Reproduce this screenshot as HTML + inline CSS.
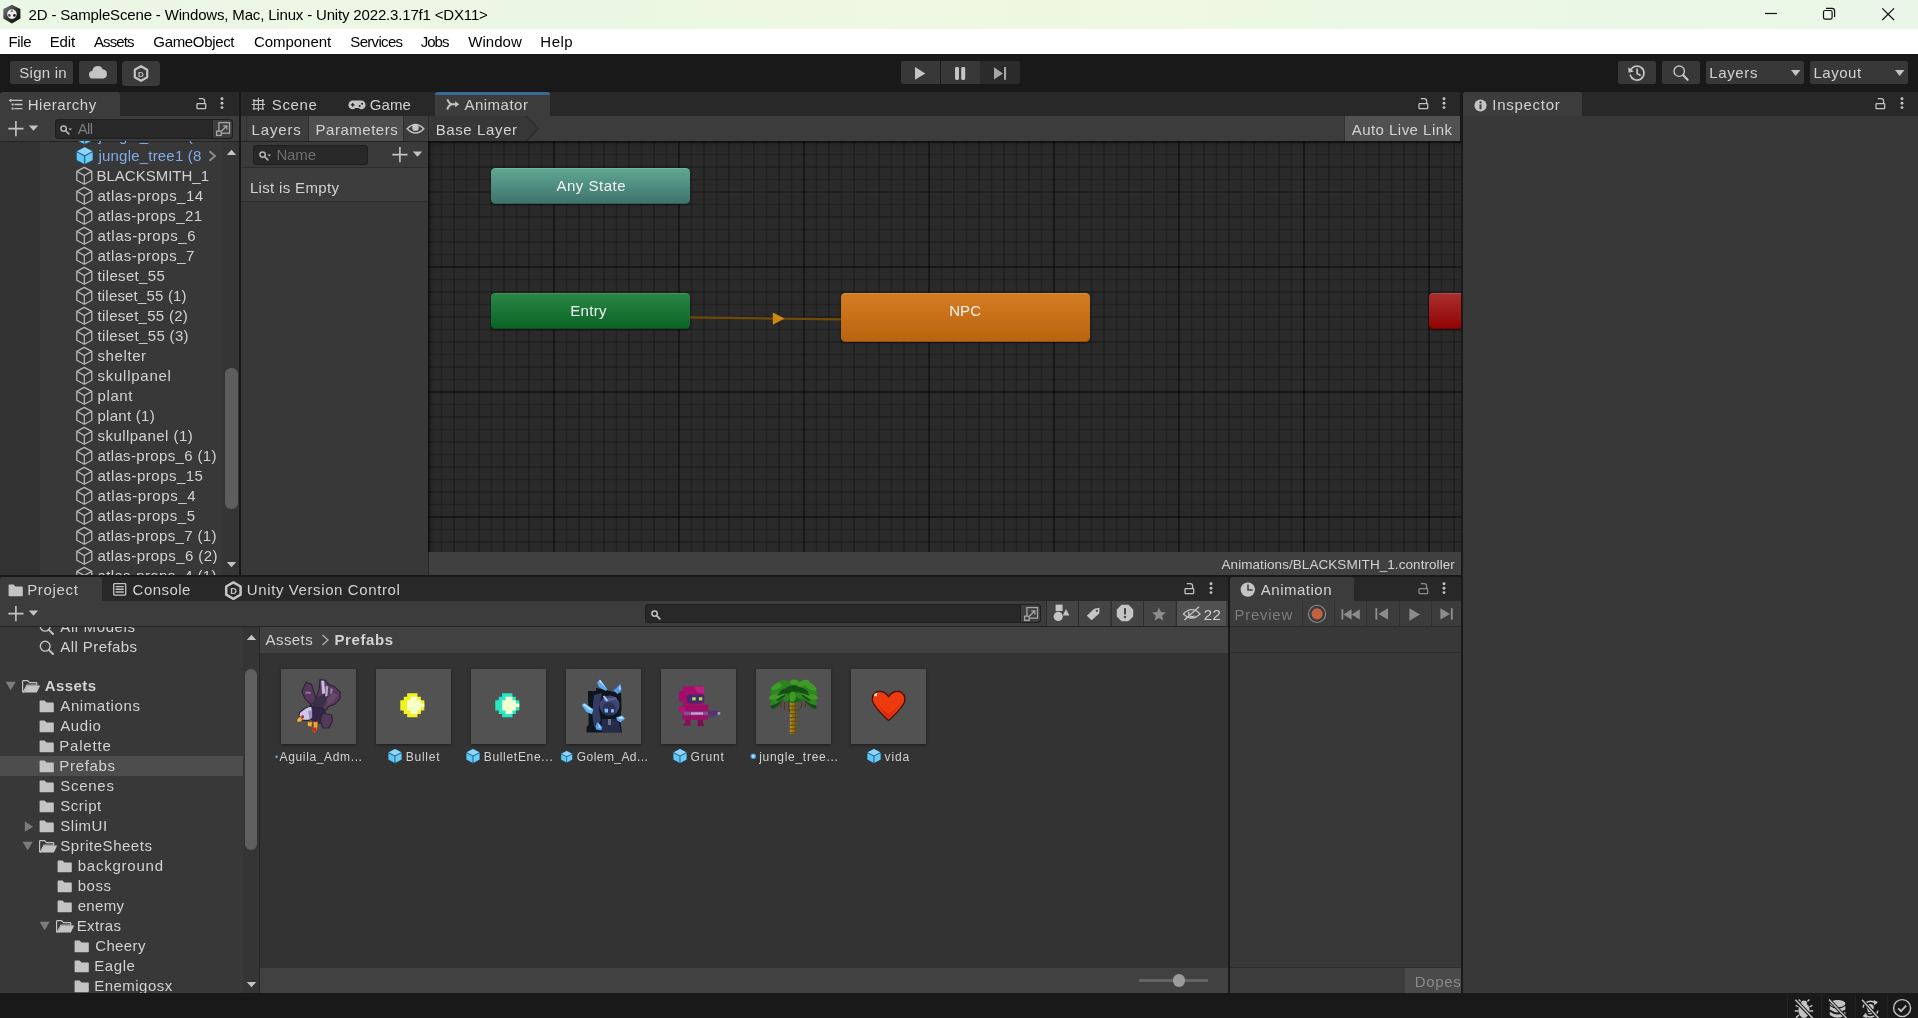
<!DOCTYPE html>
<html><head><meta charset="utf-8"><title>Unity</title><style>
html,body{margin:0;padding:0;background:#191919;}
body{width:1918px;height:1018px;overflow:hidden;position:relative;font-family:"Liberation Sans", sans-serif;}
div,span,svg{position:absolute;}
#root{left:0;top:0;width:1918px;height:1018px;will-change:transform;}
span{white-space:pre;line-height:20px;}
</style></head><body><div id="root">
<div style="left:0px;top:0px;width:1918px;height:29px;background:linear-gradient(to right,#ebf7e5 0%,#ecf7e3 30%,#eef8e1 55%,#ebf7e6 85%,#eaf7e8 100%);"></div>
<div style="left:0px;top:29px;width:1918px;height:25px;background:#ffffff;"></div>
<div style="left:0px;top:54px;width:1918px;height:964px;background:#191919;"></div>
<svg style="left:3px;top:4px;" width="19" height="20" viewBox="0 0 19 20"><defs><linearGradient id="ug" x1="0" y1="0" x2="1" y2="1"><stop offset="0" stop-color="#858585"/><stop offset=".55" stop-color="#2c2c2c"/><stop offset="1" stop-color="#050505"/></linearGradient></defs>
<path d="M8.9 .7 L17.4 5.1 V14.6 L8.9 19.6 L.3 14.6 V5.1 Z" fill="url(#ug)"/>
<circle cx="8.9" cy="10.1" r="4.8" fill="#ececec"/>
<circle cx="8.9" cy="7" r="1.25" fill="#8a8a8a"/><circle cx="6.4" cy="11.4" r="1.3" fill="#4a4a4a"/><circle cx="11.4" cy="11.4" r="1.35" fill="#1c1c1c"/></svg>
<span style="left:28.60px;top:5.04px;font-size:15px;color:#000;letter-spacing:-0.167px;">2D - SampleScene - Windows, Mac, Linux - Unity 2022.3.17f1 &lt;DX11&gt;</span>
<svg style="left:1760px;top:4px;" width="140" height="20" viewBox="0 0 140 20"><g stroke="#111" stroke-width="1.2" fill="none">
<path d="M5 9.5 H17"/>
<rect x="63.5" y="6.5" width="8.6" height="8.6" rx="1.6"/><path d="M66 4.4 H72 Q74.6 4.4 74.6 7 V13"/>
<path d="M122.3 4.3 L134 16 M134 4.3 L122.3 16"/></g></svg>
<span style="left:8.60px;top:32.04px;font-size:15px;color:#000;letter-spacing:-0.409px;">File</span>
<span style="left:49.70px;top:32.04px;font-size:15px;color:#000;letter-spacing:-0.127px;">Edit</span>
<span style="left:94.00px;top:32.04px;font-size:15px;color:#000;letter-spacing:-0.903px;">Assets</span>
<span style="left:153.30px;top:32.04px;font-size:15px;color:#000;letter-spacing:-0.337px;">GameObject</span>
<span style="left:254.00px;top:32.04px;font-size:15px;color:#000;letter-spacing:-0.048px;">Component</span>
<span style="left:350.30px;top:32.04px;font-size:15px;color:#000;letter-spacing:-0.674px;">Services</span>
<span style="left:420.70px;top:32.04px;font-size:15px;color:#000;letter-spacing:-0.962px;">Jobs</span>
<span style="left:468.30px;top:32.04px;font-size:15px;color:#000;letter-spacing:0.037px;">Window</span>
<span style="left:540.30px;top:32.04px;font-size:15px;color:#000;letter-spacing:0.498px;">Help</span>
<div style="left:10px;top:61px;width:63px;height:23px;background:#383838;border-radius:2px;"></div>
<span style="left:19.30px;top:63.04px;font-size:15px;color:#d2d2d2;letter-spacing:0.246px;">Sign in</span>
<div style="left:79px;top:61px;width:38px;height:23px;background:#383838;border-radius:2px;"></div>
<svg style="left:88px;top:65px;" width="20" height="15" viewBox="0 0 20 15"><path d="M5 13.6 a4 4 0 0 1 -.6 -7.95 a5.4 5.4 0 0 1 10.3 -1.3 a4.7 4.7 0 0 1 .6 9.25 z" fill="#c4c4c4"/></svg>
<div style="left:122px;top:61px;width:38px;height:25px;background:#3a3a3a;border-radius:4px;"></div>
<svg style="left:133px;top:65px;" width="16" height="17" viewBox="0 0 16 17"><path d="M8 1.2 L14.2 4.8 V12.2 L8 15.8 L1.8 12.2 V4.8 Z" fill="none" stroke="#c4c4c4" stroke-width="2.2" stroke-linejoin="round"/>
<text x="8" y="11.5" font-family="Liberation Sans" font-weight="700" font-size="8" fill="#c4c4c4" text-anchor="middle">D</text></svg>
<div style="left:901px;top:61px;width:39px;height:23px;background:#383838;border-radius:2px 0 0 2px;"></div>
<div style="left:941px;top:61px;width:39px;height:23px;background:#383838;"></div>
<div style="left:980px;top:61px;width:39.5px;height:23px;background:#2b2b2b;border-radius:0 2px 2px 0;"></div>
<svg style="left:901px;top:61px;" width="119" height="23" viewBox="0 0 119 23"><path d="M14 6 V18.8 L24.4 12.4 Z" fill="#c4c4c4"/>
<rect x="54" y="6" width="4" height="13" rx="1.4" fill="#c4c4c4"/><rect x="60.2" y="6" width="4" height="13" rx="1.4" fill="#c4c4c4"/>
<path d="M93 6.2 V18.6 L102 12.4 Z" fill="#a6a6a6"/><rect x="103" y="6" width="2.1" height="12.8" fill="#a6a6a6"/></svg>
<div style="left:1618px;top:61px;width:38px;height:23px;background:#383838;border-radius:2px;"></div>
<div style="left:1662px;top:61px;width:38px;height:23px;background:#383838;border-radius:2px;"></div>
<div style="left:1706px;top:61px;width:98px;height:23px;background:#383838;border-radius:2px;"></div>
<div style="left:1810px;top:61px;width:98.4px;height:23px;background:#383838;border-radius:2px;"></div>
<svg style="left:1627px;top:63px;" width="20" height="20" viewBox="0 0 20 20"><g fill="none" stroke="#c4c4c4" stroke-width="1.7" stroke-linecap="round">
<path d="M3.6 7.2 A7 7 0 1 1 3.3 12.2"/><path d="M10.1 6.2 V10.6 L13.2 12.2"/></g>
<path d="M1.2 4.2 L6.8 8.6 L1.6 9.8 Z" fill="#c4c4c4"/></svg>
<svg style="left:1672px;top:64px;" width="18" height="18" viewBox="0 0 18 18"><circle cx="7.2" cy="7.2" r="5.2" fill="none" stroke="#c4c4c4" stroke-width="1.4"/><path d="M11.2 11.2 L15.6 15.8" stroke="#c4c4c4" stroke-width="2.2" stroke-linecap="round"/></svg>
<span style="left:1709.30px;top:63.04px;font-size:15px;color:#d2d2d2;letter-spacing:0.616px;">Layers</span>
<span style="left:1813.40px;top:63.04px;font-size:15px;color:#d2d2d2;letter-spacing:0.546px;">Layout</span>
<svg style="left:1790px;top:69px;" width="12" height="8" viewBox="0 0 12 8"><path d="M1 1 H10.4 L5.7 7 Z" fill="#c4c4c4"/></svg>
<svg style="left:1894px;top:69px;" width="12" height="8" viewBox="0 0 12 8"><path d="M1 1 H10.4 L5.7 7 Z" fill="#c4c4c4"/></svg>
<div style="left:0px;top:92px;width:238.5px;height:483px;background:#383838;border-radius:3px 3px 0 0;"></div>
<div style="left:0px;top:92px;width:238.5px;height:24px;background:#282828;border-radius:3px 3px 0 0;"></div>
<div style="left:0px;top:92px;width:119.5px;height:24px;background:#3c3c3c;border-radius:3px 3px 0 0;"></div>
<svg style="left:8px;top:98px;" width="16" height="13" viewBox="0 0 16 13"><g stroke="#c4c4c4" stroke-width="1.3" fill="none"><path d="M3.2 2.4 H14.4 M6.4 6.5 H14.4 M6.4 10.6 H14.4"/></g>
<path d="M.6 2.4 L3.4 .6 V4.2 Z" fill="#c4c4c4"/><rect x="3.6" y="5.5" width="2" height="2" fill="#c4c4c4"/><rect x="3.6" y="9.6" width="2" height="2" fill="#c4c4c4"/></svg>
<span style="left:27.70px;top:95.04px;font-size:15px;color:#d2d2d2;letter-spacing:0.540px;">Hierarchy</span>
<svg style="left:195.5px;top:96.7px;" width="12" height="13" viewBox="0 0 12 13"><rect x="1" y="6.7" width="8.7" height="5" rx=".6" fill="none" stroke="#c4c4c4" stroke-width="1.25"/><path d="M2.8 1.6 H6.2 Q8.6 1.6 8.6 4 V6.6" fill="none" stroke="#c4c4c4" stroke-width="1.25"/></svg>
<svg style="left:219.9px;top:97.2px;" width="4" height="14" viewBox="0 0 4 14"><circle cx="2" cy="1.8" r="1.45" fill="#c4c4c4"/><circle cx="2" cy="6.2" r="1.45" fill="#c4c4c4"/><circle cx="2" cy="10.6" r="1.45" fill="#c4c4c4"/></svg>
<div style="left:0px;top:116px;width:238.5px;height:25px;background:#3c3c3c;"></div>
<div style="left:0px;top:140.5px;width:238.5px;height:1px;background:#232323;"></div>
<svg style="left:8.2px;top:121.3px;" width="32" height="16" viewBox="0 0 32 16"><path d="M0.3 7.6 H15.5 M7.9 0 V15.2" stroke="#c4c4c4" stroke-width="1.6" fill="none"/><path d="M20.8 4.6 H30.2 L25.5 9.8 Z" fill="#c4c4c4"/></svg>
<div style="left:54.5px;top:119px;width:178px;height:19.5px;background:#282828;border-radius:4px;box-shadow:inset 0 0 0 1px #1f1f1f;"></div>
<svg style="left:60px;top:124.5px;" width="13" height="10" viewBox="0 0 13 10"><circle cx="3.6" cy="3.6" r="2.7" fill="none" stroke="#b4b4b4" stroke-width="1.5"/><path d="M5.6 5.6 L8.8 8.9" stroke="#b4b4b4" stroke-width="1.6" stroke-linecap="round"/><path d="M8.4 3.4 H12 L10.2 5.4 Z" fill="#b4b4b4"/></svg>
<span style="left:77.70px;top:119.04px;font-size:15px;color:#7d7d7d;letter-spacing:-0.669px;">All</span>
<div style="left:212.6px;top:120px;width:19.9px;height:17.5px;background:#3d3d3d;border-radius:0 3.5px 3.5px 0;"></div>
<div style="left:212.2px;top:120px;width:1px;height:17.5px;background:#242424;"></div>
<svg style="left:213.6px;top:119.6px;" width="18" height="18" viewBox="0 0 18 18"><g fill="none" stroke="#a6a6a6" stroke-width="1.3"><rect x="4.9" y="2.6" width="10.6" height="10.6"/>
<path d="M7.6 11 L12.4 6.2 M9.2 5.8 H12.8 V9.4"/><rect x="2.6" y="11.2" width="4.6" height="4.2" fill="#3d3d3d"/></g></svg>
<div style="left:0px;top:141.5px;width:40px;height:433.5px;background:#323232;"></div>
<div style="left:222px;top:141.5px;width:16.5px;height:433.5px;background:#353535;"></div>
<div style="left:0;top:141px;width:222px;height:434px;overflow:hidden;">
<svg style="left:74.7px;top:-14.85px;" width="19.4" height="19.4" viewBox="0 0 18 18"><path d="M9 .6 L16.8 4.7 V13.3 L9 17.4 L1.2 13.3 V4.7 Z" fill="#1f5f82"/>
<path d="M9 1.2 L16.1 4.9 L9 8.5 L1.9 4.9 Z" fill="#8ed6fb"/><path d="M1.7 5.9 L8.45 9.4 V16.5 L1.7 12.9 Z" fill="#62c6f5"/><path d="M16.3 5.9 L9.55 9.4 V16.5 L16.3 12.9 Z" fill="#6ccbf7"/></svg>
<span style="left:98.50px;top:-14.66px;font-size:15px;color:#80acea;letter-spacing:0.198px;">jungle_tree1 (7</span>
<svg style="left:74.7px;top:5.15px;" width="19.4" height="19.4" viewBox="0 0 18 18"><path d="M9 .6 L16.8 4.7 V13.3 L9 17.4 L1.2 13.3 V4.7 Z" fill="#1f5f82"/>
<path d="M9 1.2 L16.1 4.9 L9 8.5 L1.9 4.9 Z" fill="#8ed6fb"/><path d="M1.7 5.9 L8.45 9.4 V16.5 L1.7 12.9 Z" fill="#62c6f5"/><path d="M16.3 5.9 L9.55 9.4 V16.5 L16.3 12.9 Z" fill="#6ccbf7"/></svg>
<span style="left:98.50px;top:5.34px;font-size:15px;color:#80acea;letter-spacing:0.198px;">jungle_tree1 (8</span>
<svg style="left:75px;top:25.4px;" width="19" height="20" viewBox="0 0 19 20"><g fill="none" stroke="#b8b8b8" stroke-width="1.3" stroke-linejoin="round"><path d="M9.3 1.45 L16.8 5.4 V14.2 L9.3 18.2 L1.8 14.2 V5.4 Z"/><path d="M1.8 5.4 L9.3 9.5 L16.8 5.4 M9.3 9.5 V18.2"/></g></svg>
<span style="left:96.50px;top:25.34px;font-size:15px;color:#d2d2d2;">BLACKSMITH_1</span>
<svg style="left:75px;top:45.4px;" width="19" height="20" viewBox="0 0 19 20"><g fill="none" stroke="#b8b8b8" stroke-width="1.3" stroke-linejoin="round"><path d="M9.3 1.45 L16.8 5.4 V14.2 L9.3 18.2 L1.8 14.2 V5.4 Z"/><path d="M1.8 5.4 L9.3 9.5 L16.8 5.4 M9.3 9.5 V18.2"/></g></svg>
<span style="left:97.50px;top:45.34px;font-size:15px;color:#d2d2d2;letter-spacing:0.493px;">atlas-props_14</span>
<svg style="left:75px;top:65.4px;" width="19" height="20" viewBox="0 0 19 20"><g fill="none" stroke="#b8b8b8" stroke-width="1.3" stroke-linejoin="round"><path d="M9.3 1.45 L16.8 5.4 V14.2 L9.3 18.2 L1.8 14.2 V5.4 Z"/><path d="M1.8 5.4 L9.3 9.5 L16.8 5.4 M9.3 9.5 V18.2"/></g></svg>
<span style="left:97.50px;top:65.34px;font-size:15px;color:#d2d2d2;letter-spacing:0.416px;">atlas-props_21</span>
<svg style="left:75px;top:85.4px;" width="19" height="20" viewBox="0 0 19 20"><g fill="none" stroke="#b8b8b8" stroke-width="1.3" stroke-linejoin="round"><path d="M9.3 1.45 L16.8 5.4 V14.2 L9.3 18.2 L1.8 14.2 V5.4 Z"/><path d="M1.8 5.4 L9.3 9.5 L16.8 5.4 M9.3 9.5 V18.2"/></g></svg>
<span style="left:97.50px;top:85.34px;font-size:15px;color:#d2d2d2;letter-spacing:0.596px;">atlas-props_6</span>
<svg style="left:75px;top:105.4px;" width="19" height="20" viewBox="0 0 19 20"><g fill="none" stroke="#b8b8b8" stroke-width="1.3" stroke-linejoin="round"><path d="M9.3 1.45 L16.8 5.4 V14.2 L9.3 18.2 L1.8 14.2 V5.4 Z"/><path d="M1.8 5.4 L9.3 9.5 L16.8 5.4 M9.3 9.5 V18.2"/></g></svg>
<span style="left:97.50px;top:105.34px;font-size:15px;color:#d2d2d2;letter-spacing:0.496px;">atlas-props_7</span>
<svg style="left:75px;top:125.4px;" width="19" height="20" viewBox="0 0 19 20"><g fill="none" stroke="#b8b8b8" stroke-width="1.3" stroke-linejoin="round"><path d="M9.3 1.45 L16.8 5.4 V14.2 L9.3 18.2 L1.8 14.2 V5.4 Z"/><path d="M1.8 5.4 L9.3 9.5 L16.8 5.4 M9.3 9.5 V18.2"/></g></svg>
<span style="left:97.50px;top:125.34px;font-size:15px;color:#d2d2d2;letter-spacing:0.348px;">tileset_55</span>
<svg style="left:75px;top:145.4px;" width="19" height="20" viewBox="0 0 19 20"><g fill="none" stroke="#b8b8b8" stroke-width="1.3" stroke-linejoin="round"><path d="M9.3 1.45 L16.8 5.4 V14.2 L9.3 18.2 L1.8 14.2 V5.4 Z"/><path d="M1.8 5.4 L9.3 9.5 L16.8 5.4 M9.3 9.5 V18.2"/></g></svg>
<span style="left:97.50px;top:145.34px;font-size:15px;color:#d2d2d2;letter-spacing:0.183px;">tileset_55 (1)</span>
<svg style="left:75px;top:165.4px;" width="19" height="20" viewBox="0 0 19 20"><g fill="none" stroke="#b8b8b8" stroke-width="1.3" stroke-linejoin="round"><path d="M9.3 1.45 L16.8 5.4 V14.2 L9.3 18.2 L1.8 14.2 V5.4 Z"/><path d="M1.8 5.4 L9.3 9.5 L16.8 5.4 M9.3 9.5 V18.2"/></g></svg>
<span style="left:97.50px;top:165.34px;font-size:15px;color:#d2d2d2;letter-spacing:0.276px;">tileset_55 (2)</span>
<svg style="left:75px;top:185.4px;" width="19" height="20" viewBox="0 0 19 20"><g fill="none" stroke="#b8b8b8" stroke-width="1.3" stroke-linejoin="round"><path d="M9.3 1.45 L16.8 5.4 V14.2 L9.3 18.2 L1.8 14.2 V5.4 Z"/><path d="M1.8 5.4 L9.3 9.5 L16.8 5.4 M9.3 9.5 V18.2"/></g></svg>
<span style="left:97.50px;top:185.34px;font-size:15px;color:#d2d2d2;letter-spacing:0.337px;">tileset_55 (3)</span>
<svg style="left:75px;top:205.4px;" width="19" height="20" viewBox="0 0 19 20"><g fill="none" stroke="#b8b8b8" stroke-width="1.3" stroke-linejoin="round"><path d="M9.3 1.45 L16.8 5.4 V14.2 L9.3 18.2 L1.8 14.2 V5.4 Z"/><path d="M1.8 5.4 L9.3 9.5 L16.8 5.4 M9.3 9.5 V18.2"/></g></svg>
<span style="left:97.50px;top:205.34px;font-size:15px;color:#d2d2d2;letter-spacing:0.596px;">shelter</span>
<svg style="left:75px;top:225.4px;" width="19" height="20" viewBox="0 0 19 20"><g fill="none" stroke="#b8b8b8" stroke-width="1.3" stroke-linejoin="round"><path d="M9.3 1.45 L16.8 5.4 V14.2 L9.3 18.2 L1.8 14.2 V5.4 Z"/><path d="M1.8 5.4 L9.3 9.5 L16.8 5.4 M9.3 9.5 V18.2"/></g></svg>
<span style="left:97.50px;top:225.34px;font-size:15px;color:#d2d2d2;letter-spacing:0.747px;">skullpanel</span>
<svg style="left:75px;top:245.4px;" width="19" height="20" viewBox="0 0 19 20"><g fill="none" stroke="#b8b8b8" stroke-width="1.3" stroke-linejoin="round"><path d="M9.3 1.45 L16.8 5.4 V14.2 L9.3 18.2 L1.8 14.2 V5.4 Z"/><path d="M1.8 5.4 L9.3 9.5 L16.8 5.4 M9.3 9.5 V18.2"/></g></svg>
<span style="left:97.50px;top:245.34px;font-size:15px;color:#d2d2d2;letter-spacing:0.610px;">plant</span>
<svg style="left:75px;top:265.4px;" width="19" height="20" viewBox="0 0 19 20"><g fill="none" stroke="#b8b8b8" stroke-width="1.3" stroke-linejoin="round"><path d="M9.3 1.45 L16.8 5.4 V14.2 L9.3 18.2 L1.8 14.2 V5.4 Z"/><path d="M1.8 5.4 L9.3 9.5 L16.8 5.4 M9.3 9.5 V18.2"/></g></svg>
<span style="left:97.50px;top:265.34px;font-size:15px;color:#d2d2d2;letter-spacing:0.271px;">plant (1)</span>
<svg style="left:75px;top:285.4px;" width="19" height="20" viewBox="0 0 19 20"><g fill="none" stroke="#b8b8b8" stroke-width="1.3" stroke-linejoin="round"><path d="M9.3 1.45 L16.8 5.4 V14.2 L9.3 18.2 L1.8 14.2 V5.4 Z"/><path d="M1.8 5.4 L9.3 9.5 L16.8 5.4 M9.3 9.5 V18.2"/></g></svg>
<span style="left:97.50px;top:285.34px;font-size:15px;color:#d2d2d2;letter-spacing:0.460px;">skullpanel (1)</span>
<svg style="left:75px;top:305.4px;" width="19" height="20" viewBox="0 0 19 20"><g fill="none" stroke="#b8b8b8" stroke-width="1.3" stroke-linejoin="round"><path d="M9.3 1.45 L16.8 5.4 V14.2 L9.3 18.2 L1.8 14.2 V5.4 Z"/><path d="M1.8 5.4 L9.3 9.5 L16.8 5.4 M9.3 9.5 V18.2"/></g></svg>
<span style="left:97.50px;top:305.34px;font-size:15px;color:#d2d2d2;letter-spacing:0.351px;">atlas-props_6 (1)</span>
<svg style="left:75px;top:325.4px;" width="19" height="20" viewBox="0 0 19 20"><g fill="none" stroke="#b8b8b8" stroke-width="1.3" stroke-linejoin="round"><path d="M9.3 1.45 L16.8 5.4 V14.2 L9.3 18.2 L1.8 14.2 V5.4 Z"/><path d="M1.8 5.4 L9.3 9.5 L16.8 5.4 M9.3 9.5 V18.2"/></g></svg>
<span style="left:97.50px;top:325.34px;font-size:15px;color:#d2d2d2;letter-spacing:0.478px;">atlas-props_15</span>
<svg style="left:75px;top:345.4px;" width="19" height="20" viewBox="0 0 19 20"><g fill="none" stroke="#b8b8b8" stroke-width="1.3" stroke-linejoin="round"><path d="M9.3 1.45 L16.8 5.4 V14.2 L9.3 18.2 L1.8 14.2 V5.4 Z"/><path d="M1.8 5.4 L9.3 9.5 L16.8 5.4 M9.3 9.5 V18.2"/></g></svg>
<span style="left:97.50px;top:345.34px;font-size:15px;color:#d2d2d2;letter-spacing:0.596px;">atlas-props_4</span>
<svg style="left:75px;top:365.4px;" width="19" height="20" viewBox="0 0 19 20"><g fill="none" stroke="#b8b8b8" stroke-width="1.3" stroke-linejoin="round"><path d="M9.3 1.45 L16.8 5.4 V14.2 L9.3 18.2 L1.8 14.2 V5.4 Z"/><path d="M1.8 5.4 L9.3 9.5 L16.8 5.4 M9.3 9.5 V18.2"/></g></svg>
<span style="left:97.50px;top:365.34px;font-size:15px;color:#d2d2d2;letter-spacing:0.555px;">atlas-props_5</span>
<svg style="left:75px;top:385.4px;" width="19" height="20" viewBox="0 0 19 20"><g fill="none" stroke="#b8b8b8" stroke-width="1.3" stroke-linejoin="round"><path d="M9.3 1.45 L16.8 5.4 V14.2 L9.3 18.2 L1.8 14.2 V5.4 Z"/><path d="M1.8 5.4 L9.3 9.5 L16.8 5.4 M9.3 9.5 V18.2"/></g></svg>
<span style="left:97.50px;top:385.34px;font-size:15px;color:#d2d2d2;letter-spacing:0.351px;">atlas-props_7 (1)</span>
<svg style="left:75px;top:405.4px;" width="19" height="20" viewBox="0 0 19 20"><g fill="none" stroke="#b8b8b8" stroke-width="1.3" stroke-linejoin="round"><path d="M9.3 1.45 L16.8 5.4 V14.2 L9.3 18.2 L1.8 14.2 V5.4 Z"/><path d="M1.8 5.4 L9.3 9.5 L16.8 5.4 M9.3 9.5 V18.2"/></g></svg>
<span style="left:97.50px;top:405.34px;font-size:15px;color:#d2d2d2;letter-spacing:0.413px;">atlas-props_6 (2)</span>
<svg style="left:75px;top:425.4px;" width="19" height="20" viewBox="0 0 19 20"><g fill="none" stroke="#b8b8b8" stroke-width="1.3" stroke-linejoin="round"><path d="M9.3 1.45 L16.8 5.4 V14.2 L9.3 18.2 L1.8 14.2 V5.4 Z"/><path d="M1.8 5.4 L9.3 9.5 L16.8 5.4 M9.3 9.5 V18.2"/></g></svg>
<span style="left:97.50px;top:425.34px;font-size:15px;color:#d2d2d2;letter-spacing:0.351px;">atlas-props_4 (1)</span>
<svg style="left:208px;top:9px;" width="9" height="12" viewBox="0 0 9 12"><path d="M1.5 1.2 L7 6 L1.5 10.8" fill="none" stroke="#8f8f8f" stroke-width="1.8"/></svg>
</div>
<svg style="left:226px;top:149px;" width="11" height="7" viewBox="0 0 11 7"><path d="M.8 6 L5.5 .8 L10.2 6 Z" fill="#c4c4c4"/></svg>
<svg style="left:226px;top:561px;" width="11" height="7" viewBox="0 0 11 7"><path d="M.8 1 L5.5 6.2 L10.2 1 Z" fill="#c4c4c4"/></svg>
<div style="left:225.2px;top:368.4px;width:12.4px;height:140.4px;background:#5e5e5e;border-radius:6.2px;"></div>
<div style="left:241.3px;top:92px;width:1218.7px;height:483px;background:#383838;border-radius:3px 3px 0 0;"></div>
<div style="left:241.3px;top:92px;width:1218.7px;height:24px;background:#282828;border-radius:3px 3px 0 0;"></div>
<svg style="left:251px;top:97px;" width="16" height="15" viewBox="0 0 16 15"><path d="M3 2 V13 M7.4 .8 V14 M11.8 2 V13 M1.8 3.55 H13 M.7 7.5 H14.1 M1.8 11.7 H13" stroke="#c4c4c4" stroke-width="1.15" fill="none"/></svg>
<span style="left:271.80px;top:95.04px;font-size:15px;color:#d2d2d2;letter-spacing:0.603px;">Scene</span>
<svg style="left:347.6px;top:100.2px;" width="19" height="10" viewBox="0 0 19 10"><path d="M4.7 .6 H13.3 A4.3 4.3 0 0 1 17.6 4.9 A4.3 4.3 0 0 1 13.3 9.2 Q11.8 9.2 10.9 8 H7.1 Q6.2 9.2 4.7 9.2 A4.3 4.3 0 0 1 .4 4.9 A4.3 4.3 0 0 1 4.7 .6 Z" fill="#c4c4c4"/>
<path d="M2.9 4.9 H6.5 M4.7 3.1 V6.7" stroke="#1e1e1e" stroke-width="1.2"/><circle cx="11.7" cy="6.1" r="1" fill="#1e1e1e"/><circle cx="14.1" cy="3.7" r="1" fill="#1e1e1e"/></svg>
<span style="left:369.80px;top:95.04px;font-size:15px;color:#d2d2d2;letter-spacing:0.065px;">Game</span>
<div style="left:434.8px;top:92px;width:115.2px;height:24px;background:#3c3c3c;border-radius:3px 3px 0 0;"></div>
<div style="left:434.8px;top:92px;width:115.2px;height:3.4px;background:#386a98;border-radius:3px 3px 0 0;"></div>
<svg style="left:446px;top:98px;" width="14" height="13" viewBox="0 0 14 13"><g fill="none" stroke="#c4c4c4" stroke-width="1.9"><path d="M1.4 1.2 Q2.8 5.8 6.4 6.2 H10.4"/><path d="M1.4 11.6 Q2 7.6 5.6 6.5"/></g><path d="M9.2 3.2 L13.2 6.2 L9.2 9.2 Z" fill="#c4c4c4"/></svg>
<span style="left:464.40px;top:95.04px;font-size:15px;color:#d2d2d2;letter-spacing:0.496px;">Animator</span>
<svg style="left:1417.6px;top:96.7px;" width="12" height="13" viewBox="0 0 12 13"><rect x="1" y="6.7" width="8.7" height="5" rx=".6" fill="none" stroke="#c4c4c4" stroke-width="1.25"/><path d="M2.8 1.6 H6.2 Q8.6 1.6 8.6 4 V6.6" fill="none" stroke="#c4c4c4" stroke-width="1.25"/></svg>
<svg style="left:1441.7px;top:97.4px;" width="4" height="14" viewBox="0 0 4 14"><circle cx="2" cy="1.8" r="1.45" fill="#c4c4c4"/><circle cx="2" cy="6.2" r="1.45" fill="#c4c4c4"/><circle cx="2" cy="10.6" r="1.45" fill="#c4c4c4"/></svg>
<div style="left:241.3px;top:116px;width:1218.7px;height:25px;background:#3c3c3c;"></div>
<div style="left:246.3px;top:116px;width:1px;height:25px;background:#303030;"></div>
<div style="left:308.3px;top:116px;width:95px;height:25px;background:#4f4f4f;"></div>
<div style="left:308.3px;top:116px;width:1px;height:25px;background:#303030;"></div>
<div style="left:403.2px;top:116px;width:1px;height:25px;background:#303030;"></div>
<div style="left:428px;top:116px;width:1px;height:25px;background:#2a2a2a;"></div>
<span style="left:251.50px;top:120.04px;font-size:15px;color:#d2d2d2;letter-spacing:0.856px;">Layers</span>
<span style="left:315.60px;top:120.04px;font-size:15px;color:#d2d2d2;letter-spacing:0.508px;">Parameters</span>
<svg style="left:405.5px;top:123.4px;" width="19" height="12" viewBox="0 0 19 12"><path d="M1.2 5.7 Q9.5 -2.9 17.8 5.7 Q9.5 14.3 1.2 5.7 Z" fill="none" stroke="#c4c4c4" stroke-width="1.5"/><circle cx="9.5" cy="4.8" r="3.3" fill="#c4c4c4"/></svg>
<svg style="left:428.5px;top:116px;" width="112" height="25" viewBox="0 0 112 25"><path d="M0 0 H97.5 L109.5 12.5 L97.5 25 H0 Z" fill="#373737"/><path d="M97.5 0 L109.5 12.5 L97.5 25" fill="none" stroke="#2b2b2b" stroke-width="1.1"/></svg>
<span style="left:435.70px;top:120.04px;font-size:15px;color:#d2d2d2;letter-spacing:0.613px;">Base Layer</span>
<div style="left:1344.7px;top:116px;width:115.29999999999995px;height:25px;background:#515151;"></div>
<div style="left:1344.2px;top:116px;width:1px;height:25px;background:#303030;"></div>
<span style="left:1351.70px;top:120.04px;font-size:15px;color:#d2d2d2;letter-spacing:0.467px;">Auto Live Link</span>
<div style="left:241.3px;top:140.6px;width:1218.7px;height:1px;background:#232323;"></div>
<div style="left:241.3px;top:141.5px;width:187px;height:26px;background:#3a3a3a;"></div>
<div style="left:253px;top:145.3px;width:114.5px;height:19.5px;background:#282828;border-radius:4px;box-shadow:inset 0 0 0 1px #1f1f1f;"></div>
<svg style="left:258.5px;top:150.6px;" width="13" height="10" viewBox="0 0 13 10"><circle cx="3.6" cy="3.6" r="2.7" fill="none" stroke="#b4b4b4" stroke-width="1.5"/><path d="M5.6 5.6 L8.8 8.9" stroke="#b4b4b4" stroke-width="1.6" stroke-linecap="round"/><path d="M8.4 3.4 H12 L10.2 5.4 Z" fill="#b4b4b4"/></svg>
<span style="left:276.40px;top:145.24px;font-size:15px;color:#6f6f6f;letter-spacing:-0.123px;">Name</span>
<svg style="left:391.5px;top:147.2px;" width="32" height="16" viewBox="0 0 32 16"><path d="M0.3 7.6 H15.5 M7.9 0 V15.2" stroke="#c4c4c4" stroke-width="1.6" fill="none"/><path d="M20.8 4.6 H30.2 L25.5 9.8 Z" fill="#c4c4c4"/></svg>
<div style="left:241.3px;top:167px;width:187px;height:1px;background:#2c2c2c;"></div>
<div style="left:241.3px;top:168px;width:187px;height:33px;background:#3d3d3d;"></div>
<div style="left:241.3px;top:200.6px;width:187px;height:1px;background:#2c2c2c;"></div>
<span style="left:249.90px;top:177.74px;font-size:15px;color:#d2d2d2;letter-spacing:0.340px;">List is Empty</span>
<div style="left:428px;top:141px;width:1033.4px;height:411px;background:#2a2a2a;overflow:hidden;">
<svg style="left:0;top:0" width="1033.4" height="411" shape-rendering="crispEdges"><rect x="0" y="0" width="2" height="411" fill="rgba(0,0,0,.42)"/><rect x="13" y="0" width="1" height="411" fill="rgba(0,0,0,.17)"/><rect x="12" y="0" width="1" height="411" fill="rgba(0,0,0,.04)"/><rect x="14" y="0" width="1" height="411" fill="rgba(0,0,0,.04)"/><rect x="25" y="0" width="2" height="411" fill="rgba(0,0,0,.2)"/><rect x="38" y="0" width="1" height="411" fill="rgba(0,0,0,.17)"/><rect x="37" y="0" width="1" height="411" fill="rgba(0,0,0,.04)"/><rect x="39" y="0" width="1" height="411" fill="rgba(0,0,0,.04)"/><rect x="50" y="0" width="2" height="411" fill="rgba(0,0,0,.2)"/><rect x="63" y="0" width="1" height="411" fill="rgba(0,0,0,.17)"/><rect x="62" y="0" width="1" height="411" fill="rgba(0,0,0,.04)"/><rect x="64" y="0" width="1" height="411" fill="rgba(0,0,0,.04)"/><rect x="75" y="0" width="2" height="411" fill="rgba(0,0,0,.2)"/><rect x="88" y="0" width="1" height="411" fill="rgba(0,0,0,.17)"/><rect x="87" y="0" width="1" height="411" fill="rgba(0,0,0,.04)"/><rect x="89" y="0" width="1" height="411" fill="rgba(0,0,0,.04)"/><rect x="100" y="0" width="2" height="411" fill="rgba(0,0,0,.2)"/><rect x="113" y="0" width="1" height="411" fill="rgba(0,0,0,.17)"/><rect x="112" y="0" width="1" height="411" fill="rgba(0,0,0,.04)"/><rect x="114" y="0" width="1" height="411" fill="rgba(0,0,0,.04)"/><rect x="125" y="0" width="2" height="411" fill="rgba(0,0,0,.42)"/><rect x="138" y="0" width="1" height="411" fill="rgba(0,0,0,.17)"/><rect x="137" y="0" width="1" height="411" fill="rgba(0,0,0,.04)"/><rect x="139" y="0" width="1" height="411" fill="rgba(0,0,0,.04)"/><rect x="150" y="0" width="2" height="411" fill="rgba(0,0,0,.2)"/><rect x="163" y="0" width="1" height="411" fill="rgba(0,0,0,.17)"/><rect x="162" y="0" width="1" height="411" fill="rgba(0,0,0,.04)"/><rect x="164" y="0" width="1" height="411" fill="rgba(0,0,0,.04)"/><rect x="175" y="0" width="2" height="411" fill="rgba(0,0,0,.2)"/><rect x="188" y="0" width="1" height="411" fill="rgba(0,0,0,.17)"/><rect x="187" y="0" width="1" height="411" fill="rgba(0,0,0,.04)"/><rect x="189" y="0" width="1" height="411" fill="rgba(0,0,0,.04)"/><rect x="200" y="0" width="2" height="411" fill="rgba(0,0,0,.2)"/><rect x="213" y="0" width="1" height="411" fill="rgba(0,0,0,.17)"/><rect x="212" y="0" width="1" height="411" fill="rgba(0,0,0,.04)"/><rect x="214" y="0" width="1" height="411" fill="rgba(0,0,0,.04)"/><rect x="225" y="0" width="2" height="411" fill="rgba(0,0,0,.2)"/><rect x="238" y="0" width="1" height="411" fill="rgba(0,0,0,.17)"/><rect x="237" y="0" width="1" height="411" fill="rgba(0,0,0,.04)"/><rect x="239" y="0" width="1" height="411" fill="rgba(0,0,0,.04)"/><rect x="250" y="0" width="2" height="411" fill="rgba(0,0,0,.42)"/><rect x="263" y="0" width="1" height="411" fill="rgba(0,0,0,.17)"/><rect x="262" y="0" width="1" height="411" fill="rgba(0,0,0,.04)"/><rect x="264" y="0" width="1" height="411" fill="rgba(0,0,0,.04)"/><rect x="275" y="0" width="2" height="411" fill="rgba(0,0,0,.2)"/><rect x="288" y="0" width="1" height="411" fill="rgba(0,0,0,.17)"/><rect x="287" y="0" width="1" height="411" fill="rgba(0,0,0,.04)"/><rect x="289" y="0" width="1" height="411" fill="rgba(0,0,0,.04)"/><rect x="300" y="0" width="2" height="411" fill="rgba(0,0,0,.2)"/><rect x="313" y="0" width="1" height="411" fill="rgba(0,0,0,.17)"/><rect x="312" y="0" width="1" height="411" fill="rgba(0,0,0,.04)"/><rect x="314" y="0" width="1" height="411" fill="rgba(0,0,0,.04)"/><rect x="325" y="0" width="2" height="411" fill="rgba(0,0,0,.2)"/><rect x="338" y="0" width="1" height="411" fill="rgba(0,0,0,.17)"/><rect x="337" y="0" width="1" height="411" fill="rgba(0,0,0,.04)"/><rect x="339" y="0" width="1" height="411" fill="rgba(0,0,0,.04)"/><rect x="350" y="0" width="2" height="411" fill="rgba(0,0,0,.2)"/><rect x="363" y="0" width="1" height="411" fill="rgba(0,0,0,.17)"/><rect x="362" y="0" width="1" height="411" fill="rgba(0,0,0,.04)"/><rect x="364" y="0" width="1" height="411" fill="rgba(0,0,0,.04)"/><rect x="375" y="0" width="2" height="411" fill="rgba(0,0,0,.42)"/><rect x="388" y="0" width="1" height="411" fill="rgba(0,0,0,.17)"/><rect x="387" y="0" width="1" height="411" fill="rgba(0,0,0,.04)"/><rect x="389" y="0" width="1" height="411" fill="rgba(0,0,0,.04)"/><rect x="400" y="0" width="2" height="411" fill="rgba(0,0,0,.2)"/><rect x="413" y="0" width="1" height="411" fill="rgba(0,0,0,.17)"/><rect x="412" y="0" width="1" height="411" fill="rgba(0,0,0,.04)"/><rect x="414" y="0" width="1" height="411" fill="rgba(0,0,0,.04)"/><rect x="425" y="0" width="2" height="411" fill="rgba(0,0,0,.2)"/><rect x="438" y="0" width="1" height="411" fill="rgba(0,0,0,.17)"/><rect x="437" y="0" width="1" height="411" fill="rgba(0,0,0,.04)"/><rect x="439" y="0" width="1" height="411" fill="rgba(0,0,0,.04)"/><rect x="450" y="0" width="2" height="411" fill="rgba(0,0,0,.2)"/><rect x="463" y="0" width="1" height="411" fill="rgba(0,0,0,.17)"/><rect x="462" y="0" width="1" height="411" fill="rgba(0,0,0,.04)"/><rect x="464" y="0" width="1" height="411" fill="rgba(0,0,0,.04)"/><rect x="475" y="0" width="2" height="411" fill="rgba(0,0,0,.2)"/><rect x="488" y="0" width="1" height="411" fill="rgba(0,0,0,.17)"/><rect x="487" y="0" width="1" height="411" fill="rgba(0,0,0,.04)"/><rect x="489" y="0" width="1" height="411" fill="rgba(0,0,0,.04)"/><rect x="500" y="0" width="2" height="411" fill="rgba(0,0,0,.42)"/><rect x="513" y="0" width="1" height="411" fill="rgba(0,0,0,.17)"/><rect x="512" y="0" width="1" height="411" fill="rgba(0,0,0,.04)"/><rect x="514" y="0" width="1" height="411" fill="rgba(0,0,0,.04)"/><rect x="525" y="0" width="2" height="411" fill="rgba(0,0,0,.2)"/><rect x="538" y="0" width="1" height="411" fill="rgba(0,0,0,.17)"/><rect x="537" y="0" width="1" height="411" fill="rgba(0,0,0,.04)"/><rect x="539" y="0" width="1" height="411" fill="rgba(0,0,0,.04)"/><rect x="550" y="0" width="2" height="411" fill="rgba(0,0,0,.2)"/><rect x="563" y="0" width="1" height="411" fill="rgba(0,0,0,.17)"/><rect x="562" y="0" width="1" height="411" fill="rgba(0,0,0,.04)"/><rect x="564" y="0" width="1" height="411" fill="rgba(0,0,0,.04)"/><rect x="575" y="0" width="2" height="411" fill="rgba(0,0,0,.2)"/><rect x="588" y="0" width="1" height="411" fill="rgba(0,0,0,.17)"/><rect x="587" y="0" width="1" height="411" fill="rgba(0,0,0,.04)"/><rect x="589" y="0" width="1" height="411" fill="rgba(0,0,0,.04)"/><rect x="600" y="0" width="2" height="411" fill="rgba(0,0,0,.2)"/><rect x="613" y="0" width="1" height="411" fill="rgba(0,0,0,.17)"/><rect x="612" y="0" width="1" height="411" fill="rgba(0,0,0,.04)"/><rect x="614" y="0" width="1" height="411" fill="rgba(0,0,0,.04)"/><rect x="625" y="0" width="2" height="411" fill="rgba(0,0,0,.42)"/><rect x="638" y="0" width="1" height="411" fill="rgba(0,0,0,.17)"/><rect x="637" y="0" width="1" height="411" fill="rgba(0,0,0,.04)"/><rect x="639" y="0" width="1" height="411" fill="rgba(0,0,0,.04)"/><rect x="650" y="0" width="2" height="411" fill="rgba(0,0,0,.2)"/><rect x="663" y="0" width="1" height="411" fill="rgba(0,0,0,.17)"/><rect x="662" y="0" width="1" height="411" fill="rgba(0,0,0,.04)"/><rect x="664" y="0" width="1" height="411" fill="rgba(0,0,0,.04)"/><rect x="675" y="0" width="2" height="411" fill="rgba(0,0,0,.2)"/><rect x="688" y="0" width="1" height="411" fill="rgba(0,0,0,.17)"/><rect x="687" y="0" width="1" height="411" fill="rgba(0,0,0,.04)"/><rect x="689" y="0" width="1" height="411" fill="rgba(0,0,0,.04)"/><rect x="700" y="0" width="2" height="411" fill="rgba(0,0,0,.2)"/><rect x="713" y="0" width="1" height="411" fill="rgba(0,0,0,.17)"/><rect x="712" y="0" width="1" height="411" fill="rgba(0,0,0,.04)"/><rect x="714" y="0" width="1" height="411" fill="rgba(0,0,0,.04)"/><rect x="725" y="0" width="2" height="411" fill="rgba(0,0,0,.2)"/><rect x="738" y="0" width="1" height="411" fill="rgba(0,0,0,.17)"/><rect x="737" y="0" width="1" height="411" fill="rgba(0,0,0,.04)"/><rect x="739" y="0" width="1" height="411" fill="rgba(0,0,0,.04)"/><rect x="750" y="0" width="2" height="411" fill="rgba(0,0,0,.42)"/><rect x="763" y="0" width="1" height="411" fill="rgba(0,0,0,.17)"/><rect x="762" y="0" width="1" height="411" fill="rgba(0,0,0,.04)"/><rect x="764" y="0" width="1" height="411" fill="rgba(0,0,0,.04)"/><rect x="775" y="0" width="2" height="411" fill="rgba(0,0,0,.2)"/><rect x="788" y="0" width="1" height="411" fill="rgba(0,0,0,.17)"/><rect x="787" y="0" width="1" height="411" fill="rgba(0,0,0,.04)"/><rect x="789" y="0" width="1" height="411" fill="rgba(0,0,0,.04)"/><rect x="800" y="0" width="2" height="411" fill="rgba(0,0,0,.2)"/><rect x="813" y="0" width="1" height="411" fill="rgba(0,0,0,.17)"/><rect x="812" y="0" width="1" height="411" fill="rgba(0,0,0,.04)"/><rect x="814" y="0" width="1" height="411" fill="rgba(0,0,0,.04)"/><rect x="825" y="0" width="2" height="411" fill="rgba(0,0,0,.2)"/><rect x="838" y="0" width="1" height="411" fill="rgba(0,0,0,.17)"/><rect x="837" y="0" width="1" height="411" fill="rgba(0,0,0,.04)"/><rect x="839" y="0" width="1" height="411" fill="rgba(0,0,0,.04)"/><rect x="850" y="0" width="2" height="411" fill="rgba(0,0,0,.2)"/><rect x="863" y="0" width="1" height="411" fill="rgba(0,0,0,.17)"/><rect x="862" y="0" width="1" height="411" fill="rgba(0,0,0,.04)"/><rect x="864" y="0" width="1" height="411" fill="rgba(0,0,0,.04)"/><rect x="875" y="0" width="2" height="411" fill="rgba(0,0,0,.42)"/><rect x="888" y="0" width="1" height="411" fill="rgba(0,0,0,.17)"/><rect x="887" y="0" width="1" height="411" fill="rgba(0,0,0,.04)"/><rect x="889" y="0" width="1" height="411" fill="rgba(0,0,0,.04)"/><rect x="900" y="0" width="2" height="411" fill="rgba(0,0,0,.2)"/><rect x="913" y="0" width="1" height="411" fill="rgba(0,0,0,.17)"/><rect x="912" y="0" width="1" height="411" fill="rgba(0,0,0,.04)"/><rect x="914" y="0" width="1" height="411" fill="rgba(0,0,0,.04)"/><rect x="925" y="0" width="2" height="411" fill="rgba(0,0,0,.2)"/><rect x="938" y="0" width="1" height="411" fill="rgba(0,0,0,.17)"/><rect x="937" y="0" width="1" height="411" fill="rgba(0,0,0,.04)"/><rect x="939" y="0" width="1" height="411" fill="rgba(0,0,0,.04)"/><rect x="950" y="0" width="2" height="411" fill="rgba(0,0,0,.2)"/><rect x="963" y="0" width="1" height="411" fill="rgba(0,0,0,.17)"/><rect x="962" y="0" width="1" height="411" fill="rgba(0,0,0,.04)"/><rect x="964" y="0" width="1" height="411" fill="rgba(0,0,0,.04)"/><rect x="975" y="0" width="2" height="411" fill="rgba(0,0,0,.2)"/><rect x="988" y="0" width="1" height="411" fill="rgba(0,0,0,.17)"/><rect x="987" y="0" width="1" height="411" fill="rgba(0,0,0,.04)"/><rect x="989" y="0" width="1" height="411" fill="rgba(0,0,0,.04)"/><rect x="1000" y="0" width="2" height="411" fill="rgba(0,0,0,.42)"/><rect x="1013" y="0" width="1" height="411" fill="rgba(0,0,0,.17)"/><rect x="1012" y="0" width="1" height="411" fill="rgba(0,0,0,.04)"/><rect x="1014" y="0" width="1" height="411" fill="rgba(0,0,0,.04)"/><rect x="1025" y="0" width="2" height="411" fill="rgba(0,0,0,.2)"/><rect x="0" y="0" width="1033.4" height="2" fill="rgba(0,0,0,.42)"/><rect x="0" y="13" width="1033.4" height="1" fill="rgba(0,0,0,.17)"/><rect x="0" y="12" width="1033.4" height="1" fill="rgba(0,0,0,.04)"/><rect x="0" y="14" width="1033.4" height="1" fill="rgba(0,0,0,.04)"/><rect x="0" y="25" width="1033.4" height="2" fill="rgba(0,0,0,.2)"/><rect x="0" y="38" width="1033.4" height="1" fill="rgba(0,0,0,.17)"/><rect x="0" y="37" width="1033.4" height="1" fill="rgba(0,0,0,.04)"/><rect x="0" y="39" width="1033.4" height="1" fill="rgba(0,0,0,.04)"/><rect x="0" y="50" width="1033.4" height="2" fill="rgba(0,0,0,.2)"/><rect x="0" y="63" width="1033.4" height="1" fill="rgba(0,0,0,.17)"/><rect x="0" y="62" width="1033.4" height="1" fill="rgba(0,0,0,.04)"/><rect x="0" y="64" width="1033.4" height="1" fill="rgba(0,0,0,.04)"/><rect x="0" y="75" width="1033.4" height="2" fill="rgba(0,0,0,.2)"/><rect x="0" y="88" width="1033.4" height="1" fill="rgba(0,0,0,.17)"/><rect x="0" y="87" width="1033.4" height="1" fill="rgba(0,0,0,.04)"/><rect x="0" y="89" width="1033.4" height="1" fill="rgba(0,0,0,.04)"/><rect x="0" y="100" width="1033.4" height="2" fill="rgba(0,0,0,.2)"/><rect x="0" y="113" width="1033.4" height="1" fill="rgba(0,0,0,.17)"/><rect x="0" y="112" width="1033.4" height="1" fill="rgba(0,0,0,.04)"/><rect x="0" y="114" width="1033.4" height="1" fill="rgba(0,0,0,.04)"/><rect x="0" y="125" width="1033.4" height="2" fill="rgba(0,0,0,.42)"/><rect x="0" y="138" width="1033.4" height="1" fill="rgba(0,0,0,.17)"/><rect x="0" y="137" width="1033.4" height="1" fill="rgba(0,0,0,.04)"/><rect x="0" y="139" width="1033.4" height="1" fill="rgba(0,0,0,.04)"/><rect x="0" y="150" width="1033.4" height="2" fill="rgba(0,0,0,.2)"/><rect x="0" y="163" width="1033.4" height="1" fill="rgba(0,0,0,.17)"/><rect x="0" y="162" width="1033.4" height="1" fill="rgba(0,0,0,.04)"/><rect x="0" y="164" width="1033.4" height="1" fill="rgba(0,0,0,.04)"/><rect x="0" y="175" width="1033.4" height="2" fill="rgba(0,0,0,.2)"/><rect x="0" y="188" width="1033.4" height="1" fill="rgba(0,0,0,.17)"/><rect x="0" y="187" width="1033.4" height="1" fill="rgba(0,0,0,.04)"/><rect x="0" y="189" width="1033.4" height="1" fill="rgba(0,0,0,.04)"/><rect x="0" y="200" width="1033.4" height="2" fill="rgba(0,0,0,.2)"/><rect x="0" y="213" width="1033.4" height="1" fill="rgba(0,0,0,.17)"/><rect x="0" y="212" width="1033.4" height="1" fill="rgba(0,0,0,.04)"/><rect x="0" y="214" width="1033.4" height="1" fill="rgba(0,0,0,.04)"/><rect x="0" y="225" width="1033.4" height="2" fill="rgba(0,0,0,.2)"/><rect x="0" y="238" width="1033.4" height="1" fill="rgba(0,0,0,.17)"/><rect x="0" y="237" width="1033.4" height="1" fill="rgba(0,0,0,.04)"/><rect x="0" y="239" width="1033.4" height="1" fill="rgba(0,0,0,.04)"/><rect x="0" y="250" width="1033.4" height="2" fill="rgba(0,0,0,.42)"/><rect x="0" y="263" width="1033.4" height="1" fill="rgba(0,0,0,.17)"/><rect x="0" y="262" width="1033.4" height="1" fill="rgba(0,0,0,.04)"/><rect x="0" y="264" width="1033.4" height="1" fill="rgba(0,0,0,.04)"/><rect x="0" y="275" width="1033.4" height="2" fill="rgba(0,0,0,.2)"/><rect x="0" y="288" width="1033.4" height="1" fill="rgba(0,0,0,.17)"/><rect x="0" y="287" width="1033.4" height="1" fill="rgba(0,0,0,.04)"/><rect x="0" y="289" width="1033.4" height="1" fill="rgba(0,0,0,.04)"/><rect x="0" y="300" width="1033.4" height="2" fill="rgba(0,0,0,.2)"/><rect x="0" y="313" width="1033.4" height="1" fill="rgba(0,0,0,.17)"/><rect x="0" y="312" width="1033.4" height="1" fill="rgba(0,0,0,.04)"/><rect x="0" y="314" width="1033.4" height="1" fill="rgba(0,0,0,.04)"/><rect x="0" y="325" width="1033.4" height="2" fill="rgba(0,0,0,.2)"/><rect x="0" y="338" width="1033.4" height="1" fill="rgba(0,0,0,.17)"/><rect x="0" y="337" width="1033.4" height="1" fill="rgba(0,0,0,.04)"/><rect x="0" y="339" width="1033.4" height="1" fill="rgba(0,0,0,.04)"/><rect x="0" y="350" width="1033.4" height="2" fill="rgba(0,0,0,.2)"/><rect x="0" y="363" width="1033.4" height="1" fill="rgba(0,0,0,.17)"/><rect x="0" y="362" width="1033.4" height="1" fill="rgba(0,0,0,.04)"/><rect x="0" y="364" width="1033.4" height="1" fill="rgba(0,0,0,.04)"/><rect x="0" y="375" width="1033.4" height="2" fill="rgba(0,0,0,.42)"/><rect x="0" y="388" width="1033.4" height="1" fill="rgba(0,0,0,.17)"/><rect x="0" y="387" width="1033.4" height="1" fill="rgba(0,0,0,.04)"/><rect x="0" y="389" width="1033.4" height="1" fill="rgba(0,0,0,.04)"/><rect x="0" y="400" width="1033.4" height="2" fill="rgba(0,0,0,.2)"/></svg>
<div style="left:0;top:0;width:1033.4px;height:411px;box-shadow:inset 7px 7px 9px -7px rgba(0,0,0,.55);"></div>
<svg style="left:262px;top:169px;" width="152" height="18" viewBox="0 0 152 18"><path d="M0 7.3 L151 9.4" stroke="#6f4b0a" stroke-width="2.2" fill="none"/><path d="M82.8 2.6 L94.6 8.6 L82.8 14.8 Z" fill="#cc880f"/></svg>
<div style="left:63px;top:27px;width:199px;height:36px;border-radius:4.5px;background:linear-gradient(to bottom,#5fa893,#3e726c);box-shadow:0 1px 2px rgba(0,0,0,.55),inset 0 1px 0 rgba(255,255,255,.13),inset 0 -1px 0 rgba(0,0,0,.18);"></div>
<span style="left:128.50px;top:35.24px;font-size:15px;color:#f2f2f2;letter-spacing:0.513px;">Any State</span>
<div style="left:63px;top:152px;width:199px;height:36px;border-radius:4.5px;background:linear-gradient(to bottom,#2a8744,#096327);box-shadow:0 1px 2px rgba(0,0,0,.55),inset 0 1px 0 rgba(255,255,255,.13),inset 0 -1px 0 rgba(0,0,0,.18);"></div>
<span style="left:142.30px;top:160.24px;font-size:15px;color:#f2f2f2;letter-spacing:0.298px;">Entry</span>
<div style="left:413px;top:152px;width:249px;height:49px;border-radius:4.5px;background:linear-gradient(to bottom,#d47c22,#b9630f);box-shadow:0 1px 2px rgba(0,0,0,.55),inset 0 1px 0 rgba(255,255,255,.13),inset 0 -1px 0 rgba(0,0,0,.18);"></div>
<span style="left:521.20px;top:160.24px;font-size:15px;color:#f2f2f2;letter-spacing:0.081px;">NPC</span>
<div style="left:1000.7px;top:151.60000000000002px;width:60px;height:36.4px;border-radius:4.5px;background:linear-gradient(to bottom,#aa2f2f,#920202);box-shadow:0 1px 2px rgba(0,0,0,.55),inset 0 1px 0 rgba(255,255,255,.13),inset 0 -1px 0 rgba(0,0,0,.18);"></div>
</div>
<div style="left:428.5px;top:552px;width:1032.5px;height:22.8px;background:#404040;"></div>
<span style="left:1221.50px;top:554.94px;font-size:13.5px;color:#d2d2d2;letter-spacing:0.067px;">Animations/BLACKSMITH_1.controller</span>
<div style="left:428px;top:552px;width:1px;height:23px;background:#2a2a2a;"></div>
<div style="left:1463px;top:92px;width:455px;height:901px;background:#383838;border-radius:3px 0 0 0;"></div>
<div style="left:1463px;top:92px;width:455px;height:24px;background:#282828;border-radius:3px 0 0 0;"></div>
<div style="left:1463px;top:92px;width:119px;height:24px;background:#3c3c3c;border-radius:3px 3px 0 0;"></div>
<svg style="left:1474px;top:98.5px;" width="13" height="13" viewBox="0 0 13 13"><circle cx="6.5" cy="6.5" r="6.1" fill="#c4c4c4"/><rect x="5.5" y="5.4" width="2" height="4.8" fill="#3c3c3c"/><circle cx="6.5" cy="3.4" r="1.15" fill="#3c3c3c"/></svg>
<span style="left:1492.30px;top:95.04px;font-size:15px;color:#d2d2d2;letter-spacing:0.712px;">Inspector</span>
<svg style="left:1875.2px;top:96.7px;" width="12" height="13" viewBox="0 0 12 13"><rect x="1" y="6.7" width="8.7" height="5" rx=".6" fill="none" stroke="#c4c4c4" stroke-width="1.25"/><path d="M2.8 1.6 H6.2 Q8.6 1.6 8.6 4 V6.6" fill="none" stroke="#c4c4c4" stroke-width="1.25"/></svg>
<svg style="left:1900px;top:97.4px;" width="4" height="14" viewBox="0 0 4 14"><circle cx="2" cy="1.8" r="1.45" fill="#c4c4c4"/><circle cx="2" cy="6.2" r="1.45" fill="#c4c4c4"/><circle cx="2" cy="10.6" r="1.45" fill="#c4c4c4"/></svg>
<div style="left:0px;top:577px;width:1228px;height:416px;background:#333333;border-radius:3px 3px 0 0;"></div>
<div style="left:0px;top:577px;width:1228px;height:24px;background:#282828;border-radius:3px 3px 0 0;"></div>
<div style="left:0px;top:577px;width:101.7px;height:24px;background:#3c3c3c;border-radius:3px 3px 0 0;"></div>
<svg style="left:8.3px;top:583.5px;" width="16" height="13" viewBox="0 0 16 13"><path d="M.6 1.4 Q.6 .6 1.4 .6 H5.6 L7.4 2.6 H14 Q14.8 2.6 14.8 3.4 V11.4 Q14.8 12.2 14 12.2 H1.4 Q.6 12.2 .6 11.4 Z" fill="#c4c4c4"/></svg>
<span style="left:27.20px;top:580.04px;font-size:15px;color:#d2d2d2;letter-spacing:0.680px;">Project</span>
<svg style="left:113px;top:583px;" width="14" height="13" viewBox="0 0 14 13"><rect x=".7" y=".7" width="12" height="11.4" rx=".8" fill="none" stroke="#c4c4c4" stroke-width="1.3"/><path d="M2.6 3.6 H10.8 M2.6 6.3 H10.8 M2.6 9 H10.8" stroke="#c4c4c4" stroke-width="1.4"/></svg>
<span style="left:132.60px;top:580.04px;font-size:15px;color:#d2d2d2;letter-spacing:0.451px;">Console</span>
<svg style="left:224px;top:580.5px;" width="19" height="19" viewBox="0 0 19 19"><path d="M9.4 1.4 L16.6 5.5 V13.7 L9.4 17.8 L2.2 13.7 V5.5 Z" fill="none" stroke="#c4c4c4" stroke-width="2.5" stroke-linejoin="round"/>
<text x="9.5" y="12.9" font-family="Liberation Sans" font-weight="700" font-size="9.2" fill="#c4c4c4" text-anchor="middle">D</text></svg>
<span style="left:246.80px;top:580.04px;font-size:15px;color:#d2d2d2;letter-spacing:0.607px;">Unity Version Control</span>
<svg style="left:1184.1px;top:581.7px;" width="12" height="13" viewBox="0 0 12 13"><rect x="1" y="6.7" width="8.7" height="5" rx=".6" fill="none" stroke="#c4c4c4" stroke-width="1.25"/><path d="M2.8 1.6 H6.2 Q8.6 1.6 8.6 4 V6.6" fill="none" stroke="#c4c4c4" stroke-width="1.25"/></svg>
<svg style="left:1209.1px;top:582.4px;" width="4" height="14" viewBox="0 0 4 14"><circle cx="2" cy="1.8" r="1.45" fill="#c4c4c4"/><circle cx="2" cy="6.2" r="1.45" fill="#c4c4c4"/><circle cx="2" cy="10.6" r="1.45" fill="#c4c4c4"/></svg>
<div style="left:0px;top:601px;width:1228px;height:25.5px;background:#3c3c3c;"></div>
<svg style="left:8.2px;top:606.3px;" width="32" height="16" viewBox="0 0 32 16"><path d="M0.3 7.6 H15.5 M7.9 0 V15.2" stroke="#c4c4c4" stroke-width="1.6" fill="none"/><path d="M20.8 4.6 H30.2 L25.5 9.8 Z" fill="#c4c4c4"/></svg>
<div style="left:645.3px;top:604.2px;width:396.2px;height:19.3px;background:#282828;border-radius:4px;box-shadow:inset 0 0 0 1px #1f1f1f;"></div>
<svg style="left:651px;top:610px;" width="13" height="10" viewBox="0 0 13 10"><circle cx="3.6" cy="3.6" r="2.7" fill="none" stroke="#c4c4c4" stroke-width="1.5"/><path d="M5.6 5.6 L8.8 8.9" stroke="#c4c4c4" stroke-width="1.6" stroke-linecap="round"/></svg>
<div style="left:1019.6px;top:605.2px;width:1px;height:17.3px;background:#1f1f1f;"></div>
<div style="left:1020.6px;top:605.2px;width:19.9px;height:17.3px;background:#3d3d3d;border-radius:0 3.5px 3.5px 0;"></div>
<svg style="left:1021.6px;top:604.8px;" width="18" height="18" viewBox="0 0 18 18"><g fill="none" stroke="#a6a6a6" stroke-width="1.3"><rect x="4.9" y="2.6" width="10.6" height="10.6"/>
<path d="M7.6 11 L12.4 6.2 M9.2 5.8 H12.8 V9.4"/><rect x="2.6" y="11.2" width="4.6" height="4.2" fill="#3d3d3d"/></g></svg>
<div style="left:1046.6px;top:601px;width:31.5px;height:25px;background:#444444;"></div>
<div style="left:1078.5px;top:601px;width:31.5px;height:25px;background:#444444;"></div>
<div style="left:1111.5px;top:601px;width:31.5px;height:25px;background:#444444;"></div>
<div style="left:1143.9px;top:601px;width:31.5px;height:25px;background:#444444;"></div>
<div style="left:1176.2px;top:601px;width:49.8px;height:25px;background:#515151;"></div>
<div style="left:1045.6px;top:601px;width:1px;height:25px;background:#2e2e2e;"></div>
<div style="left:1077.5px;top:601px;width:1px;height:25px;background:#2e2e2e;"></div>
<div style="left:1110.5px;top:601px;width:1px;height:25px;background:#2e2e2e;"></div>
<div style="left:1142.9px;top:601px;width:1px;height:25px;background:#2e2e2e;"></div>
<div style="left:1175.5px;top:601px;width:1px;height:25px;background:#2e2e2e;"></div>
<svg style="left:1052.5px;top:604.4px;" width="17" height="18" viewBox="0 0 17 18"><rect x="2.6" y=".6" width="7" height="6.4" fill="#c4c4c4"/><circle cx="5.2" cy="12.4" r="4.6" fill="#c4c4c4"/><path d="M9.8 11.4 L13 5 L16.4 11.4 Z" fill="#c4c4c4"/></svg>
<svg style="left:1086px;top:607px;" width="15" height="14" viewBox="0 0 15 14"><path d="M.8 8.8 L8.2 1.8 L13.6 .8 L13.2 6.4 L5.6 13.2 Z" fill="#c4c4c4"/><circle cx="10.8" cy="3.8" r="1.1" fill="#444"/></svg>
<svg style="left:1116px;top:604.4px;" width="18" height="18" viewBox="0 0 18 18"><path d="M5.6 .8 H12.4 L17.2 5.6 V12.4 L12.4 17.2 H5.6 L.8 12.4 V5.6 Z" fill="#c4c4c4"/><rect x="8" y="4" width="2" height="6.4" rx=".6" fill="#444"/><circle cx="9" cy="13" r="1.2" fill="#444"/></svg>
<svg style="left:1151px;top:607px;" width="16" height="14" viewBox="0 0 16 14"><path d="M8 .4 L10 4.9 L14.9 5.4 L11.2 8.7 L12.3 13.5 L8 11 L3.7 13.5 L4.8 8.7 L1.1 5.4 L6 4.9 Z" fill="#8c8c8c"/></svg>
<svg style="left:1182px;top:606px;" width="20" height="15" viewBox="0 0 20 15"><path d="M1.4 8 Q9.6 -.6 18 8 Q9.6 16 1.4 8 Z" fill="none" stroke="#c4c4c4" stroke-width="1.3"/><path d="M7 5.6 A3.4 3.4 0 0 0 12.4 9.6" fill="none" stroke="#c4c4c4" stroke-width="1.3"/><path d="M2.4 14 L17 .8" stroke="#c4c4c4" stroke-width="1.4"/></svg>
<span style="left:1203.80px;top:604.84px;font-size:15px;color:#d2d2d2;letter-spacing:0.258px;">22</span>
<div style="left:0px;top:626px;width:1228px;height:1px;background:#232323;"></div>
<div style="left:0px;top:627px;width:259px;height:366px;background:#383838;"></div>
<div style="left:242.5px;top:627px;width:16.5px;height:366px;background:#353535;"></div>
<div style="left:259px;top:627px;width:1px;height:366px;background:#262626;"></div>
<div style="left:0;top:627px;width:242.5px;height:366px;overflow:hidden;">
<svg style="left:39.1px;top:-7.4px;" width="16" height="16" viewBox="0 0 16 16"><circle cx="6.2" cy="6.2" r="4.9" fill="none" stroke="#c4c4c4" stroke-width="1.4"/><path d="M9.9 9.9 L14 14" stroke="#c4c4c4" stroke-width="2" stroke-linecap="round"/></svg>
<span style="left:60.30px;top:-9.66px;font-size:15px;color:#d2d2d2;letter-spacing:0.612px;">All Models</span>
<svg style="left:39.1px;top:12.6px;" width="16" height="16" viewBox="0 0 16 16"><circle cx="6.2" cy="6.2" r="4.9" fill="none" stroke="#c4c4c4" stroke-width="1.4"/><path d="M9.9 9.9 L14 14" stroke="#c4c4c4" stroke-width="2" stroke-linecap="round"/></svg>
<span style="left:60.30px;top:10.34px;font-size:15px;color:#d2d2d2;letter-spacing:0.417px;">All Prefabs</span>
<svg style="left:21.999999999999996px;top:52.6px;" width="19" height="13" viewBox="0 0 19 13"><path d="M.6 1.4 Q.6 .6 1.4 .6 H5.6 L7.4 2.6 H14 Q14.8 2.6 14.8 3.4 V5 H5 L1.6 11.6 V12.2 Q.6 12.2 .6 11.4 Z" fill="none" stroke="#c4c4c4" stroke-width="1.2"/><path d="M5.2 5.6 H18.2 L14.8 12.4 H1.6 Z" fill="#c4c4c4"/></svg>
<svg style="left:4.599999999999998px;top:54.4px;" width="12" height="10" viewBox="0 0 12 10"><path d="M.6 .8 H10.8 L5.7 9.2 Z" fill="#7c7c7c"/></svg>
<span style="left:44.80px;top:49.34px;font-size:15px;color:#d2d2d2;letter-spacing:0.429px;font-weight:700;">Assets</span>
<svg style="left:39.1px;top:72.6px;" width="16" height="13" viewBox="0 0 16 13"><path d="M.6 1.4 Q.6 .6 1.4 .6 H5.6 L7.4 2.6 H14 Q14.8 2.6 14.8 3.4 V11.4 Q14.8 12.2 14 12.2 H1.4 Q.6 12.2 .6 11.4 Z" fill="#c4c4c4"/></svg>
<span style="left:60.30px;top:69.34px;font-size:15px;color:#d2d2d2;letter-spacing:0.600px;">Animations</span>
<svg style="left:39.1px;top:92.6px;" width="16" height="13" viewBox="0 0 16 13"><path d="M.6 1.4 Q.6 .6 1.4 .6 H5.6 L7.4 2.6 H14 Q14.8 2.6 14.8 3.4 V11.4 Q14.8 12.2 14 12.2 H1.4 Q.6 12.2 .6 11.4 Z" fill="#c4c4c4"/></svg>
<span style="left:60.30px;top:89.34px;font-size:15px;color:#d2d2d2;letter-spacing:0.570px;">Audio</span>
<svg style="left:39.1px;top:112.6px;" width="16" height="13" viewBox="0 0 16 13"><path d="M.6 1.4 Q.6 .6 1.4 .6 H5.6 L7.4 2.6 H14 Q14.8 2.6 14.8 3.4 V11.4 Q14.8 12.2 14 12.2 H1.4 Q.6 12.2 .6 11.4 Z" fill="#c4c4c4"/></svg>
<span style="left:59.30px;top:109.34px;font-size:15px;color:#d2d2d2;letter-spacing:0.791px;">Palette</span>
<div style="left:0px;top:129px;width:242.5px;height:20px;background:#4d4d4d;"></div>
<svg style="left:39.1px;top:132.6px;" width="16" height="13" viewBox="0 0 16 13"><path d="M.6 1.4 Q.6 .6 1.4 .6 H5.6 L7.4 2.6 H14 Q14.8 2.6 14.8 3.4 V11.4 Q14.8 12.2 14 12.2 H1.4 Q.6 12.2 .6 11.4 Z" fill="#c4c4c4"/></svg>
<span style="left:59.30px;top:129.34px;font-size:15px;color:#d2d2d2;letter-spacing:0.684px;">Prefabs</span>
<svg style="left:39.1px;top:152.6px;" width="16" height="13" viewBox="0 0 16 13"><path d="M.6 1.4 Q.6 .6 1.4 .6 H5.6 L7.4 2.6 H14 Q14.8 2.6 14.8 3.4 V11.4 Q14.8 12.2 14 12.2 H1.4 Q.6 12.2 .6 11.4 Z" fill="#c4c4c4"/></svg>
<span style="left:60.30px;top:149.34px;font-size:15px;color:#d2d2d2;letter-spacing:0.714px;">Scenes</span>
<svg style="left:39.1px;top:172.6px;" width="16" height="13" viewBox="0 0 16 13"><path d="M.6 1.4 Q.6 .6 1.4 .6 H5.6 L7.4 2.6 H14 Q14.8 2.6 14.8 3.4 V11.4 Q14.8 12.2 14 12.2 H1.4 Q.6 12.2 .6 11.4 Z" fill="#c4c4c4"/></svg>
<span style="left:60.30px;top:169.34px;font-size:15px;color:#d2d2d2;letter-spacing:0.525px;">Script</span>
<svg style="left:39.1px;top:192.6px;" width="16" height="13" viewBox="0 0 16 13"><path d="M.6 1.4 Q.6 .6 1.4 .6 H5.6 L7.4 2.6 H14 Q14.8 2.6 14.8 3.4 V11.4 Q14.8 12.2 14 12.2 H1.4 Q.6 12.2 .6 11.4 Z" fill="#c4c4c4"/></svg>
<svg style="left:23.5px;top:193.6px;" width="10" height="12" viewBox="0 0 10 12"><path d="M.8 .6 V10.8 L9.2 5.7 Z" fill="#7c7c7c"/></svg>
<span style="left:60.30px;top:189.34px;font-size:15px;color:#d2d2d2;letter-spacing:0.520px;">SlimUI</span>
<svg style="left:38.9px;top:212.6px;" width="19" height="13" viewBox="0 0 19 13"><path d="M.6 1.4 Q.6 .6 1.4 .6 H5.6 L7.4 2.6 H14 Q14.8 2.6 14.8 3.4 V5 H5 L1.6 11.6 V12.2 Q.6 12.2 .6 11.4 Z" fill="none" stroke="#c4c4c4" stroke-width="1.2"/><path d="M5.2 5.6 H18.2 L14.8 12.4 H1.6 Z" fill="#c4c4c4"/></svg>
<svg style="left:21.5px;top:214.4px;" width="12" height="10" viewBox="0 0 12 10"><path d="M.6 .8 H10.8 L5.7 9.2 Z" fill="#7c7c7c"/></svg>
<span style="left:60.30px;top:209.34px;font-size:15px;color:#d2d2d2;letter-spacing:0.520px;">SpriteSheets</span>
<svg style="left:56.50000000000001px;top:232.6px;" width="16" height="13" viewBox="0 0 16 13"><path d="M.6 1.4 Q.6 .6 1.4 .6 H5.6 L7.4 2.6 H14 Q14.8 2.6 14.8 3.4 V11.4 Q14.8 12.2 14 12.2 H1.4 Q.6 12.2 .6 11.4 Z" fill="#c4c4c4"/></svg>
<span style="left:77.70px;top:229.34px;font-size:15px;color:#d2d2d2;letter-spacing:0.772px;">background</span>
<svg style="left:56.50000000000001px;top:252.6px;" width="16" height="13" viewBox="0 0 16 13"><path d="M.6 1.4 Q.6 .6 1.4 .6 H5.6 L7.4 2.6 H14 Q14.8 2.6 14.8 3.4 V11.4 Q14.8 12.2 14 12.2 H1.4 Q.6 12.2 .6 11.4 Z" fill="#c4c4c4"/></svg>
<span style="left:77.70px;top:249.34px;font-size:15px;color:#d2d2d2;letter-spacing:0.505px;">boss</span>
<svg style="left:56.50000000000001px;top:272.6px;" width="16" height="13" viewBox="0 0 16 13"><path d="M.6 1.4 Q.6 .6 1.4 .6 H5.6 L7.4 2.6 H14 Q14.8 2.6 14.8 3.4 V11.4 Q14.8 12.2 14 12.2 H1.4 Q.6 12.2 .6 11.4 Z" fill="#c4c4c4"/></svg>
<span style="left:77.70px;top:269.34px;font-size:15px;color:#d2d2d2;letter-spacing:0.345px;">enemy</span>
<svg style="left:56.300000000000004px;top:292.6px;" width="19" height="13" viewBox="0 0 19 13"><path d="M.6 1.4 Q.6 .6 1.4 .6 H5.6 L7.4 2.6 H14 Q14.8 2.6 14.8 3.4 V5 H5 L1.6 11.6 V12.2 Q.6 12.2 .6 11.4 Z" fill="none" stroke="#c4c4c4" stroke-width="1.2"/><path d="M5.2 5.6 H18.2 L14.8 12.4 H1.6 Z" fill="#c4c4c4"/></svg>
<svg style="left:38.900000000000006px;top:294.4px;" width="12" height="10" viewBox="0 0 12 10"><path d="M.6 .8 H10.8 L5.7 9.2 Z" fill="#7c7c7c"/></svg>
<span style="left:76.70px;top:289.34px;font-size:15px;color:#d2d2d2;letter-spacing:0.378px;">Extras</span>
<svg style="left:74.0px;top:312.6px;" width="16" height="13" viewBox="0 0 16 13"><path d="M.6 1.4 Q.6 .6 1.4 .6 H5.6 L7.4 2.6 H14 Q14.8 2.6 14.8 3.4 V11.4 Q14.8 12.2 14 12.2 H1.4 Q.6 12.2 .6 11.4 Z" fill="#c4c4c4"/></svg>
<span style="left:95.20px;top:309.34px;font-size:15px;color:#d2d2d2;letter-spacing:0.369px;">Cheery</span>
<svg style="left:74.0px;top:332.6px;" width="16" height="13" viewBox="0 0 16 13"><path d="M.6 1.4 Q.6 .6 1.4 .6 H5.6 L7.4 2.6 H14 Q14.8 2.6 14.8 3.4 V11.4 Q14.8 12.2 14 12.2 H1.4 Q.6 12.2 .6 11.4 Z" fill="#c4c4c4"/></svg>
<span style="left:94.20px;top:329.34px;font-size:15px;color:#d2d2d2;letter-spacing:0.595px;">Eagle</span>
<svg style="left:74.0px;top:352.6px;" width="16" height="13" viewBox="0 0 16 13"><path d="M.6 1.4 Q.6 .6 1.4 .6 H5.6 L7.4 2.6 H14 Q14.8 2.6 14.8 3.4 V11.4 Q14.8 12.2 14 12.2 H1.4 Q.6 12.2 .6 11.4 Z" fill="#c4c4c4"/></svg>
<span style="left:94.20px;top:349.34px;font-size:15px;color:#d2d2d2;letter-spacing:0.475px;">Enemigosx</span>
</div>
<svg style="left:246px;top:634px;" width="11" height="7" viewBox="0 0 11 7"><path d="M.8 6 L5.5 .8 L10.2 6 Z" fill="#c4c4c4"/></svg>
<svg style="left:246px;top:980.5px;" width="11" height="7" viewBox="0 0 11 7"><path d="M.8 1 L5.5 6.2 L10.2 1 Z" fill="#c4c4c4"/></svg>
<div style="left:245px;top:669px;width:12.4px;height:181px;background:#5f5f5f;border-radius:6.2px;"></div>
<div style="left:260px;top:627px;width:968px;height:26px;background:#414141;"></div>
<span style="left:265.60px;top:630.44px;font-size:15px;color:#d2d2d2;letter-spacing:0.417px;">Assets</span>
<svg style="left:321px;top:634px;" width="9" height="12" viewBox="0 0 9 12"><path d="M1.4 1 L7 6 L1.4 11" fill="none" stroke="#a8a8a8" stroke-width="1.5"/></svg>
<span style="left:334.40px;top:630.44px;font-size:15px;color:#d2d2d2;letter-spacing:0.619px;font-weight:700;">Prefabs</span>
<div style="left:260px;top:968px;width:968px;height:25px;background:#414141;"></div>
<div style="left:1139px;top:978.9px;width:69px;height:3px;background:#646464;"></div>
<div style="left:1172.6px;top:974.2px;width:12.6px;height:12.6px;background:#9b9b9b;border-radius:50%;"></div>
<div style="left:280.5px;top:668.5px;width:75.5px;height:75.5px;background:#525252;box-shadow:0 1px 3px rgba(0,0,0,.45);"></div>
<svg style="left:281px;top:669px;" width="75" height="75" viewBox="0 0 75 75"><defs><filter id="b4" x="-10%" y="-10%" width="120%" height="120%"><feGaussianBlur stdDeviation=".45"/></filter><filter id="b3" x="-10%" y="-10%" width="120%" height="120%"><feGaussianBlur stdDeviation=".3"/></filter></defs><g filter="url(#b4)"><polygon points="25.2,13 30.6,15.4 33.6,25 35.4,32.4 29.5,35.4 24.2,29.8 20.8,22.8" fill="#55395a" stroke="#2c2238" stroke-width="1.1" stroke-linejoin="round"/><polygon points="39,10.6 44.6,11.4 47.6,15.4 53.4,17.6 59,22.8 59,29.7 54.2,35 47.6,37.4 44.6,41.7 38.3,41.7 32,37.2 35,29.5 37.9,20.6" fill="#573b5c" stroke="#2c2238" stroke-width="1.1" stroke-linejoin="round"/><polygon points="34,30 42,25 47,27 44,35 40,41.4 32.6,38.4" fill="#3b2d4a" /><polygon points="46,30 52,24 57,26 52,33 46.6,36.4" fill="#684668" /><polygon points="40.2,11.6 43.2,11.8 44.2,24 41.2,25.2" fill="#c6bce0" /><polygon points="44.8,16.6 47.2,17.6 46.4,27 44.2,27.6" fill="#b6a6d0" /><polygon points="49.6,18.8 52.2,20.2 50.4,25.4 49,24.6" fill="#9078a6" /><polygon points="24.6,22.6 29.7,23 29.7,24.8 24.6,24.4" fill="#9078a6" /><polygon points="30.6,38 42.9,39.6 44.8,45.7 41.7,53.2 35.4,55 30.2,50" fill="#322846" stroke="#2c2238" stroke-width="1.1" stroke-linejoin="round"/><polygon points="41.3,44 50.5,46 51.4,51.6 48.2,59 41.8,59 39.4,51.6" fill="#54385a" stroke="#2c2238" stroke-width="1.1" stroke-linejoin="round"/><polygon points="30.6,36.2 31.4,41.3 31.4,49 28,51.4 21.8,51.4 17.8,47.2 18.8,43.2 24.2,39.2" fill="#cfc8e8" stroke="#2c2238" stroke-width="1.1" stroke-linejoin="round"/><polygon points="27,42 31.2,41.3 31.2,48.8 28.6,50.4" fill="#9b90be" /><polygon points="16,50 19.2,47.4 21.8,50.8 19.2,53.1 16,53.1" fill="#f2b43c" stroke="#5a3c1c" stroke-width=".6"/><polygon points="20.4,46.4 22.8,46.4 22.8,49.2 20.4,49.2" fill="#c01818" /><polygon points="26.3,52.8 31.7,52.8 30.6,57.9 26.3,57.2" fill="#eeb03c" stroke="#5a3c1c" stroke-width=".6"/><polygon points="32,52.8 37,52.8 36.6,60 33.6,64 31,62.2 32.4,57" fill="#efa63a" stroke="#5a3c1c" stroke-width=".6"/><polygon points="31.6,58.6 35.8,58.6 35,62.6 32,63" fill="#d02a1c" /></g></svg>
<div style="left:375.5px;top:668.5px;width:75.5px;height:75.5px;background:#525252;box-shadow:0 1px 3px rgba(0,0,0,.45);"></div>
<svg style="left:376px;top:669px;" width="75" height="75" viewBox="0 0 75 75"><g filter="url(#b3)"><path d="M31.16 24.30 L31.16 27.73 L27.73 27.73 L27.73 31.16 L24.30 31.16 L24.30 34.59 L24.30 34.59 L24.30 38.02 L24.30 38.02 L24.30 41.45 L27.73 41.45 L27.73 44.88 L31.16 44.88 L31.16 48.31 L41.45 48.31 L41.45 44.88 L44.88 44.88 L44.88 41.45 L48.31 41.45 L48.31 38.02 L48.31 38.02 L48.31 34.59 L48.31 34.59 L48.31 31.16 L44.88 31.16 L44.88 27.73 L41.45 27.73 L41.45 24.30 Z" fill="#f2f222"/><path d="M34.59 27.73 L34.59 31.16 L31.16 31.16 L31.16 34.59 L31.16 34.59 L31.16 38.02 L31.16 38.02 L31.16 41.45 L34.59 41.45 L34.59 44.88 L41.45 44.88 L41.45 41.45 L44.88 41.45 L44.88 38.02 L48.31 38.02 L48.31 34.59 L44.88 34.59 L44.88 31.16 L41.45 31.16 L41.45 27.73 Z" fill="#f6ffc8"/></g></svg>
<div style="left:470.5px;top:668.5px;width:75.5px;height:75.5px;background:#525252;box-shadow:0 1px 3px rgba(0,0,0,.45);"></div>
<svg style="left:471px;top:669px;" width="75" height="75" viewBox="0 0 75 75"><g filter="url(#b3)"><path d="M31.16 24.30 L31.16 27.73 L27.73 27.73 L27.73 31.16 L24.30 31.16 L24.30 34.59 L24.30 34.59 L24.30 38.02 L24.30 38.02 L24.30 41.45 L27.73 41.45 L27.73 44.88 L31.16 44.88 L31.16 48.31 L41.45 48.31 L41.45 44.88 L44.88 44.88 L44.88 41.45 L48.31 41.45 L48.31 38.02 L48.31 38.02 L48.31 34.59 L48.31 34.59 L48.31 31.16 L44.88 31.16 L44.88 27.73 L41.45 27.73 L41.45 24.30 Z" fill="#28e8c4"/><path d="M34.59 27.73 L34.59 31.16 L31.16 31.16 L31.16 34.59 L31.16 34.59 L31.16 38.02 L31.16 38.02 L31.16 41.45 L34.59 41.45 L34.59 44.88 L41.45 44.88 L41.45 41.45 L44.88 41.45 L44.88 38.02 L48.31 38.02 L48.31 34.59 L44.88 34.59 L44.88 31.16 L41.45 31.16 L41.45 27.73 Z" fill="#f2ffd0"/></g></svg>
<div style="left:565.5px;top:668.5px;width:75.5px;height:75.5px;background:#525252;box-shadow:0 1px 3px rgba(0,0,0,.45);"></div>
<svg style="left:566px;top:669px;" width="75" height="75" viewBox="0 0 75 75"><g filter="url(#b4)"><polygon points="22,22 30,22 30,19 40,21 48,23 55,24 55.6,40 54,50 56,63.6 20.6,63.6 20.6,58 22.6,56 22.6,44 22,30" fill="#10131f" /><polygon points="28,26 36,24 33,40 35,52 28,58 26,44" fill="#333a62" /><circle cx="43.6" cy="36.6" r="10" fill="#3d4470"/><circle cx="43" cy="40" r="6.6" fill="#2b3158"/><polygon points="37,30 50,28 53,36 50,30.6 40,33" fill="#596290" /><polygon points="36,50 52,50 55,63 36,63" fill="#262c4c" /><polygon points="42,50 45,50 45,56 42,56" fill="#6a6f88" /><polygon points="31.1,13.6 33.9,10.6 41.6,20.3 39.8,22 33,17.9" fill="#5aaaf0" /><polygon points="33,12 34.2,11 40,19" fill="#d4ecff" /><polygon points="54.4,14.8 55.5,21.4 51.6,25.2 47.7,21.4" fill="#4f9cf0" /><polygon points="54,15.6 54.8,20 52.6,21" fill="#c4e2ff" /><polygon points="15.6,36.1 18.4,34 27.5,40.5 25.8,45.2 20.6,42.9" fill="#62b2f4" /><polygon points="17,35.6 18.8,35 26,40.6 24,41.2" fill="#c8e6ff" /><polygon points="50,48.6 56,46.6 59.2,49.4 54.5,53.2 51.6,51.8" fill="#5eaef2" /><polygon points="52,48.4 56,47.4 58,49.2 54,49.8" fill="#cfeaff" /><polygon points="31.7,52.8 36.3,58.2 35.4,61.4 30.2,60.6 29.3,57.5" fill="#4f9ff0" /><polygon points="32,54 35,58.4 33,59" fill="#b8dcff" /><polygon points="36.8,27.3 38.4,26.6 42.2,31.4 40.4,32.4" fill="#a8d0fa" /><polygon points="38.3,39.8 42,39.8 42,43.5 39,43.5" fill="#7cc0f4" /><polygon points="45,40.2 47.9,40.2 47.9,43.5 45,43.5" fill="#7cc0f4" /></g></svg>
<div style="left:660.5px;top:668.5px;width:75.5px;height:75.5px;background:#525252;box-shadow:0 1px 3px rgba(0,0,0,.45);"></div>
<svg style="left:661px;top:669px;" width="75" height="75" viewBox="0 0 75 75"><g filter="url(#b4)"><rect x="21.4" y="17.2" width="21.8" height="18.6" rx="3" fill="#a8106c"/><polygon points="33,17.4 43.2,18 43.2,25 36,23" fill="#b82080" /><rect x="17.8" y="22" width="5" height="10.4" rx="1.6" fill="#a00e68"/><rect x="25.6" y="25.2" width="17.6" height="9.2" rx="3" fill="#4a286e"/><rect x="31.2" y="28.3" width="3.5" height="3.1" fill="#a6e450"/><rect x="37.9" y="28.3" width="3.5" height="3.1" fill="#a6e450"/><rect x="21.4" y="35.4" width="25.8" height="15.4" rx="2" fill="#9e0e66"/><rect x="17.6" y="37.2" width="7" height="5.8" rx="1.6" fill="#a81272"/><rect x="22.8" y="42.6" width="24.4" height="3.6" fill="#84508c"/><rect x="30" y="43.4" width="12" height="2.2" fill="#c8a6d8"/><rect x="47" y="41.8" width="11" height="4.2" fill="#553070"/><rect x="48" y="46" width="6.6" height="1.8" fill="#5a3474"/><rect x="56.6" y="43" width="2.6" height="2.8" fill="#a894c0"/><rect x="24.3" y="50.6" width="5.2" height="6.2" fill="#8a0a5c"/><rect x="22.8" y="54.6" width="3" height="2.2" fill="#8a0a5c"/><rect x="36.8" y="50.6" width="5.2" height="6.2" fill="#7c0852"/><rect x="36.8" y="54.6" width="6.2" height="2.2" fill="#7c0852"/></g></svg>
<div style="left:755.5px;top:668.5px;width:75.5px;height:75.5px;background:#525252;box-shadow:0 1px 3px rgba(0,0,0,.45);"></div>
<svg style="left:756px;top:669px;" width="75" height="75" viewBox="0 0 75 75"><g filter="url(#b4)"><rect x="33.9" y="32" width="6.3" height="33" fill="#9c7618"/><rect x="33.9" y="32" width="1.5" height="33" fill="#b89022"/><rect x="38.6" y="32" width="1.6" height="33" fill="#6e5010"/><rect x="33.9" y="36.6" width="6.3" height="1.1" fill="#5e420e"/><rect x="33.9" y="40.4" width="6.3" height="1.1" fill="#5e420e"/><rect x="33.9" y="44.2" width="6.3" height="1.1" fill="#5e420e"/><rect x="33.9" y="48" width="6.3" height="1.1" fill="#5e420e"/><rect x="33.9" y="51.8" width="6.3" height="1.1" fill="#5e420e"/><rect x="33.9" y="55.6" width="6.3" height="1.1" fill="#5e420e"/><rect x="33.9" y="59.4" width="6.3" height="1.1" fill="#5e420e"/><rect x="33.9" y="63.2" width="6.3" height="1.1" fill="#5e420e"/><path d="M36 38 L38.4 42 M37.6 46 L35.4 50 M36 54 L38 57" stroke="#3c7a1e" stroke-width=".9" fill="none"/><path d="M25 33 V38.4 M28.4 33 V41 M33 33 Q32 41 34.4 43.4 M46 33 Q46 39.6 41.4 41.4 M49.4 33 V38.4" stroke="#56321a" stroke-width="1" fill="none"/><ellipse cx="37.5" cy="24.5" rx="14" ry="9.5" transform="rotate(0 37.5 24.5)" fill="#1f661a"/><ellipse cx="20.6" cy="34.4" rx="7.6" ry="2.8" transform="rotate(-42 20.6 34.4)" fill="#174f15"/><ellipse cx="54.6" cy="34.4" rx="7.6" ry="2.8" transform="rotate(42 54.6 34.4)" fill="#174f15"/><ellipse cx="21.4" cy="30.6" rx="8.8" ry="3" transform="rotate(-34 21.4 30.6)" fill="#2f8420"/><ellipse cx="53.6" cy="30.6" rx="8.8" ry="3" transform="rotate(34 53.6 30.6)" fill="#2f8420"/><ellipse cx="21.6" cy="26" rx="9.2" ry="3.2" transform="rotate(-24 21.6 26)" fill="#3f9b26"/><ellipse cx="53.4" cy="26" rx="9.2" ry="3.2" transform="rotate(24 53.4 26)" fill="#3f9b26"/><ellipse cx="22" cy="21" rx="8.8" ry="3.2" transform="rotate(-22 22 21)" fill="#2f8420"/><ellipse cx="53.4" cy="21.4" rx="8.8" ry="3.2" transform="rotate(22 53.4 21.4)" fill="#2f8420"/><ellipse cx="21.6" cy="16.8" rx="7.6" ry="2.9" transform="rotate(-30 21.6 16.8)" fill="#3f9b26"/><ellipse cx="54" cy="17" rx="7.6" ry="2.9" transform="rotate(34 54 17)" fill="#3f9b26"/><ellipse cx="29.6" cy="14.4" rx="6.4" ry="2.8" transform="rotate(18 29.6 14.4)" fill="#2f8420"/><ellipse cx="47" cy="14.4" rx="6.6" ry="2.8" transform="rotate(-22 47 14.4)" fill="#3f9b26"/><ellipse cx="38.4" cy="13.2" rx="4.4" ry="2.8" transform="rotate(0 38.4 13.2)" fill="#3f9b26"/><ellipse cx="30" cy="22" rx="6.6" ry="2.6" transform="rotate(-14 30 22)" fill="#174f15"/><ellipse cx="45.6" cy="21.6" rx="6.6" ry="2.6" transform="rotate(14 45.6 21.6)" fill="#174f15"/><ellipse cx="36.6" cy="27.6" rx="3.4" ry="5.2" transform="rotate(8 36.6 27.6)" fill="#3f9b26"/><ellipse cx="44.6" cy="27" rx="5.6" ry="3" transform="rotate(24 44.6 27)" fill="#2f8420"/><ellipse cx="30.6" cy="28.6" rx="3" ry="3.8" transform="rotate(20 30.6 28.6)" fill="#2f8420"/><ellipse cx="37.6" cy="19.4" rx="6.4" ry="3" transform="rotate(0 37.6 19.4)" fill="#174f15"/><ellipse cx="26" cy="24" rx="5" ry="1.2" transform="rotate(-24 26 24)" fill="#174f15"/><ellipse cx="49" cy="24" rx="5" ry="1.2" transform="rotate(24 49 24)" fill="#174f15"/><ellipse cx="25" cy="29" rx="5" ry="1.1" transform="rotate(-32 25 29)" fill="#174f15"/><ellipse cx="50" cy="29" rx="5" ry="1.1" transform="rotate(32 50 29)" fill="#174f15"/></g></svg>
<div style="left:850.5px;top:668.5px;width:75.5px;height:75.5px;background:#525252;box-shadow:0 1px 3px rgba(0,0,0,.45);"></div>
<svg style="left:851px;top:669px;" width="75" height="75" viewBox="0 0 75 75"><g filter="url(#b3)"><path d="M37.6 27.6 Q33 21.4 26.6 22.6 Q20.6 24.6 21.4 31.6 Q23 38 37.6 51.4 Q52.4 38 53.8 31.6 Q54.6 24.6 48.6 22.6 Q42.2 21.4 37.6 27.6 Z" fill="#ee3a0e" stroke="#4a0c06" stroke-width="1.3"/><path d="M24 31 Q30 42 37.6 49 Q45 42 51.6 31 Q46 40 37.6 45 Q29 40 24 31Z" fill="#d82c08"/><rect x="23.4" y="24.8" width="2.2" height="2.4" fill="#fff"/><rect x="24.6" y="24" width="1.6" height="1.2" fill="#ffe0d8"/></g></svg>
<svg style="left:275.2px;top:754.6px;" width="4" height="4" viewBox="0 0 4 4"><circle cx="1.6" cy="1.8" r="1.2" fill="#58b8ec"/></svg>
<span style="left:279.60px;top:747.03px;font-size:12px;color:#d2d2d2;letter-spacing:0.636px;">Aguila_Adm...</span>
<svg style="left:387.2px;top:747.6px;" width="16" height="16" viewBox="0 0 18 18"><path d="M9 .6 L16.8 4.7 V13.3 L9 17.4 L1.2 13.3 V4.7 Z" fill="#1f5f82"/>
<path d="M9 1.2 L16.1 4.9 L9 8.5 L1.9 4.9 Z" fill="#8ed6fb"/><path d="M1.7 5.9 L8.45 9.4 V16.5 L1.7 12.9 Z" fill="#62c6f5"/><path d="M16.3 5.9 L9.55 9.4 V16.5 L16.3 12.9 Z" fill="#6ccbf7"/></svg>
<span style="left:405.70px;top:747.03px;font-size:12px;color:#d2d2d2;letter-spacing:0.763px;">Bullet</span>
<svg style="left:465px;top:747.6px;" width="16" height="16" viewBox="0 0 18 18"><path d="M9 .6 L16.8 4.7 V13.3 L9 17.4 L1.2 13.3 V4.7 Z" fill="#1f5f82"/>
<path d="M9 1.2 L16.1 4.9 L9 8.5 L1.9 4.9 Z" fill="#8ed6fb"/><path d="M1.7 5.9 L8.45 9.4 V16.5 L1.7 12.9 Z" fill="#62c6f5"/><path d="M16.3 5.9 L9.55 9.4 V16.5 L16.3 12.9 Z" fill="#6ccbf7"/></svg>
<span style="left:483.70px;top:747.03px;font-size:12px;color:#d2d2d2;letter-spacing:0.697px;">BulletEne...</span>
<svg style="left:560.4px;top:749.6px;" width="13.4" height="13.4" viewBox="0 0 18 18"><path d="M9 .6 L16.8 4.7 V13.3 L9 17.4 L1.2 13.3 V4.7 Z" fill="#1f5f82"/>
<path d="M9 1.2 L16.1 4.9 L9 8.5 L1.9 4.9 Z" fill="#8ed6fb"/><path d="M1.7 5.9 L8.45 9.4 V16.5 L1.7 12.9 Z" fill="#62c6f5"/><path d="M16.3 5.9 L9.55 9.4 V16.5 L16.3 12.9 Z" fill="#6ccbf7"/></svg>
<span style="left:576.80px;top:747.03px;font-size:12px;color:#d2d2d2;letter-spacing:0.434px;">Golem_Ad...</span>
<svg style="left:672.2px;top:747.6px;" width="16" height="16" viewBox="0 0 18 18"><path d="M9 .6 L16.8 4.7 V13.3 L9 17.4 L1.2 13.3 V4.7 Z" fill="#1f5f82"/>
<path d="M9 1.2 L16.1 4.9 L9 8.5 L1.9 4.9 Z" fill="#8ed6fb"/><path d="M1.7 5.9 L8.45 9.4 V16.5 L1.7 12.9 Z" fill="#62c6f5"/><path d="M16.3 5.9 L9.55 9.4 V16.5 L16.3 12.9 Z" fill="#6ccbf7"/></svg>
<span style="left:690.60px;top:747.03px;font-size:12px;color:#d2d2d2;letter-spacing:0.781px;">Grunt</span>
<svg style="left:750px;top:752.6px;" width="7" height="7" viewBox="0 0 7 7"><circle cx="3.3" cy="3.3" r="2.8" fill="#3f9bd6"/><path d="M3.3 1.6 L4.8 2.5 V4.2 L3.3 5.1 L1.8 4.2 V2.5 Z" fill="#a8dcf8"/></svg>
<span style="left:759.20px;top:747.03px;font-size:12px;color:#d2d2d2;letter-spacing:0.712px;">jungle_tree...</span>
<svg style="left:866.2px;top:747.6px;" width="16" height="16" viewBox="0 0 18 18"><path d="M9 .6 L16.8 4.7 V13.3 L9 17.4 L1.2 13.3 V4.7 Z" fill="#1f5f82"/>
<path d="M9 1.2 L16.1 4.9 L9 8.5 L1.9 4.9 Z" fill="#8ed6fb"/><path d="M1.7 5.9 L8.45 9.4 V16.5 L1.7 12.9 Z" fill="#62c6f5"/><path d="M16.3 5.9 L9.55 9.4 V16.5 L16.3 12.9 Z" fill="#6ccbf7"/></svg>
<span style="left:884.60px;top:747.03px;font-size:12px;color:#d2d2d2;letter-spacing:0.820px;">vida</span>
<div style="left:1230px;top:577px;width:231px;height:416px;background:#383838;border-radius:3px 3px 0 0;"></div>
<div style="left:1230px;top:577px;width:231px;height:24px;background:#282828;border-radius:3px 3px 0 0;"></div>
<div style="left:1230px;top:577px;width:123.8px;height:24px;background:#3c3c3c;border-radius:3px 3px 0 0;"></div>
<svg style="left:1240px;top:582.4px;" width="16" height="16" viewBox="0 0 16 16"><circle cx="7.8" cy="7.6" r="7.2" fill="#c4c4c4"/><path d="M8 2.6 V8 H12.6" fill="none" stroke="#3c3c3c" stroke-width="1.5"/></svg>
<span style="left:1260.80px;top:580.04px;font-size:15px;color:#d2d2d2;letter-spacing:0.505px;">Animation</span>
<svg style="left:1417.6px;top:581.7px;" width="12" height="13" viewBox="0 0 12 13"><rect x="1" y="6.7" width="8.7" height="5" rx=".6" fill="none" stroke="#8a8a8a" stroke-width="1.25"/><path d="M2.8 1.6 H6.2 Q8.6 1.6 8.6 4 V6.6" fill="none" stroke="#8a8a8a" stroke-width="1.25"/></svg>
<svg style="left:1442.1px;top:582.4px;" width="4" height="14" viewBox="0 0 4 14"><circle cx="2" cy="1.8" r="1.45" fill="#c4c4c4"/><circle cx="2" cy="6.2" r="1.45" fill="#c4c4c4"/><circle cx="2" cy="10.6" r="1.45" fill="#c4c4c4"/></svg>
<div style="left:1230px;top:601px;width:231px;height:25px;background:#3c3c3c;"></div>
<div style="left:1301.6px;top:601px;width:1px;height:25px;background:#303030;"></div>
<div style="left:1334.4px;top:601px;width:1px;height:25px;background:#303030;"></div>
<div style="left:1366.3px;top:601px;width:1px;height:25px;background:#303030;"></div>
<div style="left:1399.4px;top:601px;width:1px;height:25px;background:#303030;"></div>
<div style="left:1431.3px;top:601px;width:1px;height:25px;background:#303030;"></div>
<div style="left:1230px;top:626px;width:231px;height:1px;background:#2c2c2c;"></div>
<div style="left:1230px;top:651.6px;width:231px;height:1px;background:#2c2c2c;"></div>
<span style="left:1234.60px;top:604.84px;font-size:15px;color:#7c7c7c;letter-spacing:0.714px;">Preview</span>
<svg style="left:1307px;top:604px;" width="20" height="20" viewBox="0 0 20 20"><circle cx="10.1" cy="9.9" r="8.6" fill="none" stroke="#8c8c8c" stroke-width="1.1"/><circle cx="10.1" cy="9.9" r="5.6" fill="#c4603e"/></svg>
<svg style="left:1340.6px;top:608.6px;" width="20" height="11" viewBox="0 0 20 11"><rect x=".4" y=".2" width="1.9" height="10.4" fill="#8c8c8c"/><path d="M10.6 .2 V10.6 L2.4 5.4 Z M18.8 .2 V10.6 L10.6 5.4 Z" fill="#8c8c8c"/></svg>
<svg style="left:1375.2px;top:608.2px;" width="14" height="12" viewBox="0 0 14 12"><rect x=".4" y=".2" width="1.9" height="11.4" fill="#8c8c8c"/><path d="M13 .2 V11.6 L3.4 5.9 Z" fill="#8c8c8c"/></svg>
<svg style="left:1409.4px;top:607.6px;" width="12" height="13" viewBox="0 0 12 13"><path d="M.4 .3 V12.7 L11 6.5 Z" fill="#8c8c8c"/></svg>
<svg style="left:1440.4px;top:608.2px;" width="14" height="12" viewBox="0 0 14 12"><path d="M.4 .2 V11.6 L10 5.9 Z" fill="#8c8c8c"/><rect x="10.9" y=".2" width="1.9" height="11.4" fill="#8c8c8c"/></svg>
<div style="left:1230px;top:967.4px;width:231px;height:1px;background:#2c2c2c;"></div>
<div style="left:1230px;top:968.4px;width:231px;height:24.6px;background:#3c3c3c;"></div>
<div style="left:1405px;top:968.4px;width:56px;height:24.6px;background:#4a4a4a;"></div>
<span style="left:1414.80px;top:971.94px;font-size:15px;color:#8a8a8a;letter-spacing:0.635px;width:46px;overflow:hidden;">Dopes</span>
<div style="left:0px;top:993px;width:1918px;height:25px;background:#191919;"></div>
<div style="left:1787.4px;top:995px;width:1px;height:23px;background:#232323;"></div>
<div style="left:1820.9px;top:995px;width:1px;height:23px;background:#232323;"></div>
<div style="left:1854.5px;top:995px;width:1px;height:23px;background:#232323;"></div>
<div style="left:1887.3px;top:995px;width:1px;height:23px;background:#232323;"></div>
<svg style="left:1794px;top:998.8px;" width="21" height="20" viewBox="0 0 21 20"><ellipse cx="10" cy="11.6" rx="5.6" ry="7.4" fill="#c4c4c4"/><circle cx="10" cy="4.4" r="3" fill="#c4c4c4"/>
<path d="M6.6 2.6 L4.6 .6 M13.4 2.6 L15.4 .6 M4.6 8 L1.6 6.4 M15.4 8 L18.4 6.4 M4.4 12 H.8 M15.6 12 H19.2 M5 16 L2 18.6 M15 16 L18 18.6" stroke="#c4c4c4" stroke-width="1.4" fill="none"/>
<path d="M1 .6 L19 19.4" stroke="#191919" stroke-width="3.6"/><path d="M1.4 .8 L18.8 19.2" stroke="#c4c4c4" stroke-width="1.5"/></svg>
<svg style="left:1828px;top:998.8px;" width="20" height="20" viewBox="0 0 20 20"><ellipse cx="9.6" cy="4.6" rx="7.8" ry="3.6" fill="#c4c4c4"/>
<path d="M1.8 7 Q9.6 12.6 17.4 7 V10.6 Q9.6 16.2 1.8 10.6 Z M1.8 12.8 Q9.6 18.4 17.4 12.8 V16 Q9.6 21.6 1.8 16 Z" fill="#c4c4c4"/>
<path d="M.6 .2 L19 19.6" stroke="#191919" stroke-width="3.4"/><path d="M1 .6 L18.6 19.2" stroke="#c4c4c4" stroke-width="1.5"/></svg>
<svg style="left:1860px;top:998.8px;" width="21" height="20" viewBox="0 0 21 20"><path d="M3 8.6 A7.6 7.6 0 0 1 15.4 4.2 M17.8 11.6 A7.6 7.6 0 0 1 5.2 16" fill="none" stroke="#c4c4c4" stroke-width="1.5"/>
<path d="M13.6 1 L18 3 L14.4 6.6 Z M7 19.2 L2.6 17.2 L6.2 13.6 Z" fill="#c4c4c4"/>
<path d="M10.2 5 A3.6 3.6 0 0 1 12.6 11.4 V13 H7.8 V11.4 A3.6 3.6 0 0 1 10.2 5 Z" fill="#c4c4c4"/><rect x="8.4" y="13.8" width="3.6" height="1.4" fill="#c4c4c4"/>
<path d="M1.6 .4 L19 19.6" stroke="#191919" stroke-width="3.4"/><path d="M2 .8 L18.6 19.2" stroke="#c4c4c4" stroke-width="1.5"/></svg>
<svg style="left:1892px;top:998px;" width="21" height="20" viewBox="0 0 21 20"><circle cx="10.1" cy="10.1" r="8.5" fill="none" stroke="#c4c4c4" stroke-width="1.4"/><path d="M6.2 10.4 L9 13.2 L14.2 7.6" fill="none" stroke="#c4c4c4" stroke-width="1.7"/></svg>
</div></body></html>
